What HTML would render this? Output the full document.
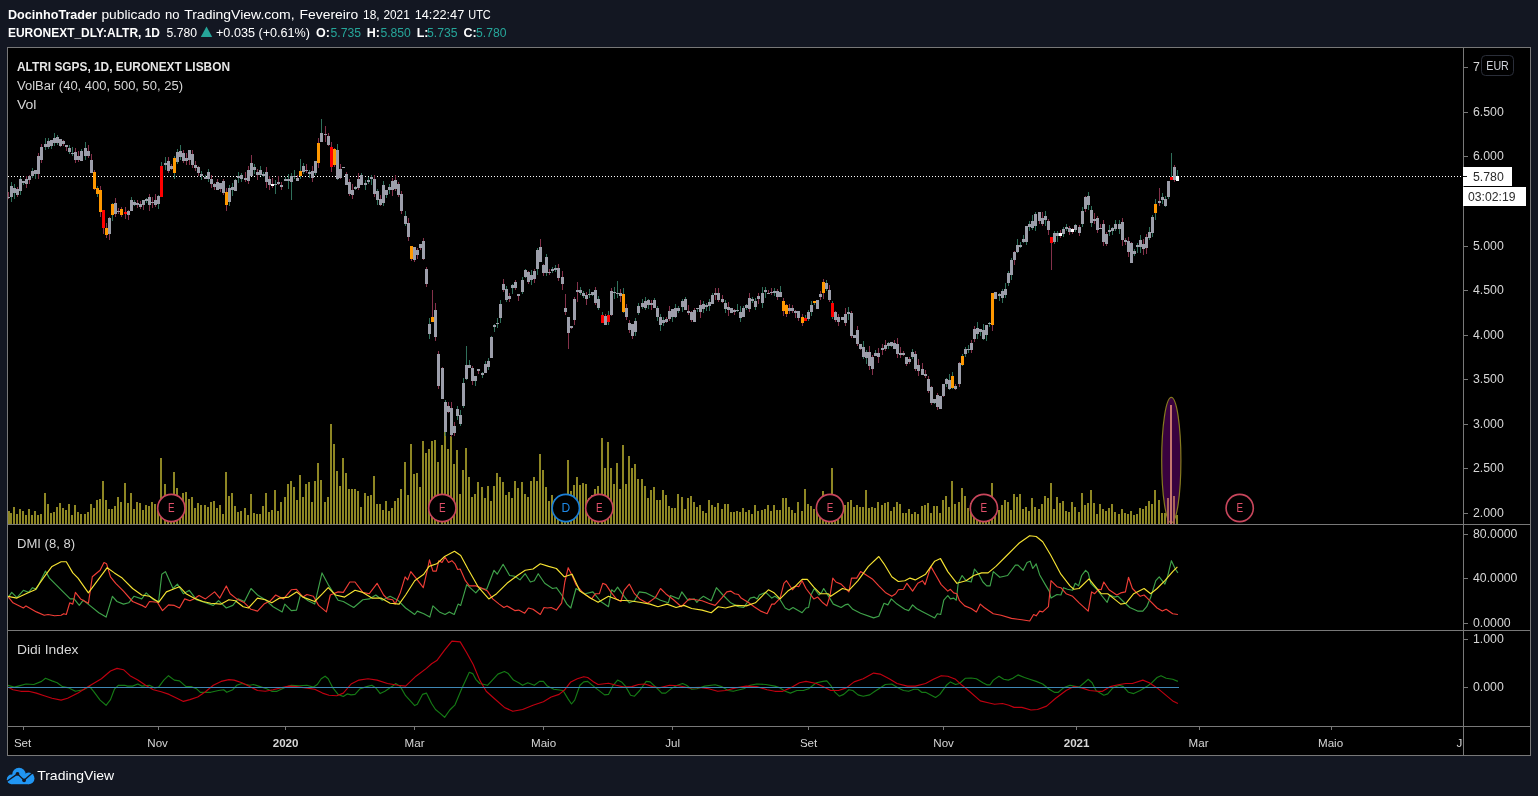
<!DOCTYPE html>
<html><head><meta charset="utf-8"><title>ALTRI SGPS chart</title>
<style>html,body{margin:0;padding:0;background:#131722;overflow:hidden}svg{display:block;will-change:transform;transform:translateZ(0)}text{font-family:"Liberation Sans",sans-serif}</style></head>
<body>
<svg width="1538" height="796" viewBox="0 0 1538 796">
<rect x="0" y="0" width="1538" height="796" fill="#131722"/>
<rect x="7" y="47" width="1524" height="709" fill="#000000"/>
<g clip-path="url(#cp)">
<defs><clipPath id="cp"><rect x="8" y="48" width="1455" height="678"/></clipPath></defs>
<g shape-rendering="crispEdges" fill="#8e8624">
<rect x="8" y="511" width="2" height="13"/>
<rect x="10" y="513" width="2" height="11"/>
<rect x="13" y="507" width="2" height="17"/>
<rect x="16" y="514" width="2" height="10"/>
<rect x="19" y="509" width="2" height="15"/>
<rect x="22" y="511" width="2" height="13"/>
<rect x="25" y="515" width="2" height="9"/>
<rect x="28" y="509" width="2" height="15"/>
<rect x="31" y="515" width="2" height="9"/>
<rect x="34" y="511" width="2" height="13"/>
<rect x="37" y="515" width="2" height="9"/>
<rect x="40" y="514" width="2" height="10"/>
<rect x="44" y="493" width="2" height="31"/>
<rect x="47" y="504" width="2" height="20"/>
<rect x="50" y="513" width="2" height="11"/>
<rect x="53" y="512" width="2" height="12"/>
<rect x="56" y="507" width="2" height="17"/>
<rect x="59" y="503" width="2" height="21"/>
<rect x="62" y="508" width="2" height="16"/>
<rect x="65" y="510" width="2" height="14"/>
<rect x="68" y="504" width="2" height="20"/>
<rect x="71" y="515" width="2" height="9"/>
<rect x="74" y="505" width="2" height="19"/>
<rect x="77" y="512" width="2" height="12"/>
<rect x="80" y="514" width="2" height="10"/>
<rect x="84" y="514" width="2" height="10"/>
<rect x="87" y="512" width="2" height="12"/>
<rect x="90" y="504" width="2" height="20"/>
<rect x="93" y="508" width="2" height="16"/>
<rect x="96" y="500" width="2" height="24"/>
<rect x="99" y="499" width="2" height="25"/>
<rect x="102" y="481" width="2" height="43"/>
<rect x="105" y="500" width="2" height="24"/>
<rect x="108" y="509" width="2" height="15"/>
<rect x="111" y="509" width="2" height="15"/>
<rect x="114" y="506" width="2" height="18"/>
<rect x="117" y="497" width="2" height="27"/>
<rect x="120" y="502" width="2" height="22"/>
<rect x="124" y="483" width="2" height="41"/>
<rect x="127" y="503" width="2" height="21"/>
<rect x="130" y="493" width="2" height="31"/>
<rect x="133" y="509" width="2" height="15"/>
<rect x="136" y="502" width="2" height="22"/>
<rect x="139" y="503" width="2" height="21"/>
<rect x="142" y="510" width="2" height="14"/>
<rect x="145" y="505" width="2" height="19"/>
<rect x="148" y="506" width="2" height="18"/>
<rect x="151" y="502" width="2" height="22"/>
<rect x="154" y="504" width="2" height="20"/>
<rect x="157" y="510" width="2" height="14"/>
<rect x="160" y="458" width="2" height="66"/>
<rect x="164" y="484" width="2" height="40"/>
<rect x="167" y="505" width="2" height="19"/>
<rect x="170" y="498" width="2" height="26"/>
<rect x="173" y="472" width="2" height="52"/>
<rect x="176" y="488" width="2" height="36"/>
<rect x="179" y="508" width="2" height="16"/>
<rect x="182" y="493" width="2" height="31"/>
<rect x="185" y="492" width="2" height="32"/>
<rect x="188" y="499" width="2" height="25"/>
<rect x="191" y="497" width="2" height="27"/>
<rect x="194" y="508" width="2" height="16"/>
<rect x="197" y="503" width="2" height="21"/>
<rect x="200" y="505" width="2" height="19"/>
<rect x="204" y="505" width="2" height="19"/>
<rect x="207" y="507" width="2" height="17"/>
<rect x="210" y="502" width="2" height="22"/>
<rect x="213" y="501" width="2" height="23"/>
<rect x="216" y="508" width="2" height="16"/>
<rect x="219" y="505" width="2" height="19"/>
<rect x="222" y="514" width="2" height="10"/>
<rect x="225" y="472" width="2" height="52"/>
<rect x="228" y="496" width="2" height="28"/>
<rect x="231" y="493" width="2" height="31"/>
<rect x="234" y="506" width="2" height="18"/>
<rect x="237" y="512" width="2" height="12"/>
<rect x="240" y="511" width="2" height="13"/>
<rect x="244" y="508" width="2" height="16"/>
<rect x="247" y="515" width="2" height="9"/>
<rect x="250" y="494" width="2" height="30"/>
<rect x="253" y="513" width="2" height="11"/>
<rect x="256" y="514" width="2" height="10"/>
<rect x="259" y="514" width="2" height="10"/>
<rect x="262" y="506" width="2" height="18"/>
<rect x="265" y="493" width="2" height="31"/>
<rect x="268" y="512" width="2" height="12"/>
<rect x="271" y="510" width="2" height="14"/>
<rect x="274" y="490" width="2" height="34"/>
<rect x="277" y="511" width="2" height="13"/>
<rect x="280" y="502" width="2" height="22"/>
<rect x="284" y="497" width="2" height="27"/>
<rect x="287" y="484" width="2" height="40"/>
<rect x="290" y="481" width="2" height="43"/>
<rect x="293" y="487" width="2" height="37"/>
<rect x="296" y="500" width="2" height="24"/>
<rect x="299" y="475" width="2" height="49"/>
<rect x="302" y="497" width="2" height="27"/>
<rect x="305" y="484" width="2" height="40"/>
<rect x="308" y="482" width="2" height="42"/>
<rect x="311" y="502" width="2" height="22"/>
<rect x="314" y="481" width="2" height="43"/>
<rect x="317" y="463" width="2" height="61"/>
<rect x="320" y="480" width="2" height="44"/>
<rect x="324" y="502" width="2" height="22"/>
<rect x="327" y="497" width="2" height="27"/>
<rect x="330" y="424" width="2" height="100"/>
<rect x="333" y="444" width="2" height="80"/>
<rect x="336" y="471" width="2" height="53"/>
<rect x="339" y="486" width="2" height="38"/>
<rect x="342" y="458" width="2" height="66"/>
<rect x="345" y="473" width="2" height="51"/>
<rect x="348" y="489" width="2" height="35"/>
<rect x="351" y="489" width="2" height="35"/>
<rect x="354" y="489" width="2" height="35"/>
<rect x="357" y="491" width="2" height="33"/>
<rect x="360" y="507" width="2" height="17"/>
<rect x="364" y="493" width="2" height="31"/>
<rect x="367" y="496" width="2" height="28"/>
<rect x="370" y="495" width="2" height="29"/>
<rect x="373" y="476" width="2" height="48"/>
<rect x="376" y="504" width="2" height="20"/>
<rect x="379" y="504" width="2" height="20"/>
<rect x="382" y="510" width="2" height="14"/>
<rect x="385" y="501" width="2" height="23"/>
<rect x="388" y="511" width="2" height="13"/>
<rect x="391" y="508" width="2" height="16"/>
<rect x="394" y="501" width="2" height="23"/>
<rect x="397" y="498" width="2" height="26"/>
<rect x="400" y="489" width="2" height="35"/>
<rect x="404" y="462" width="2" height="62"/>
<rect x="407" y="495" width="2" height="29"/>
<rect x="410" y="444" width="2" height="80"/>
<rect x="413" y="474" width="2" height="50"/>
<rect x="416" y="473" width="2" height="51"/>
<rect x="419" y="487" width="2" height="37"/>
<rect x="422" y="441" width="2" height="83"/>
<rect x="425" y="453" width="2" height="71"/>
<rect x="428" y="449" width="2" height="75"/>
<rect x="431" y="441" width="2" height="83"/>
<rect x="434" y="440" width="2" height="84"/>
<rect x="437" y="462" width="2" height="62"/>
<rect x="441" y="445" width="2" height="79"/>
<rect x="444" y="432" width="2" height="92"/>
<rect x="447" y="449" width="2" height="75"/>
<rect x="450" y="436" width="2" height="88"/>
<rect x="453" y="464" width="2" height="60"/>
<rect x="456" y="450" width="2" height="74"/>
<rect x="459" y="494" width="2" height="30"/>
<rect x="462" y="470" width="2" height="54"/>
<rect x="465" y="448" width="2" height="76"/>
<rect x="468" y="477" width="2" height="47"/>
<rect x="471" y="497" width="2" height="27"/>
<rect x="474" y="494" width="2" height="30"/>
<rect x="477" y="482" width="2" height="42"/>
<rect x="481" y="487" width="2" height="37"/>
<rect x="484" y="498" width="2" height="26"/>
<rect x="487" y="486" width="2" height="38"/>
<rect x="490" y="501" width="2" height="23"/>
<rect x="493" y="486" width="2" height="38"/>
<rect x="496" y="473" width="2" height="51"/>
<rect x="499" y="477" width="2" height="47"/>
<rect x="502" y="482" width="2" height="42"/>
<rect x="505" y="495" width="2" height="29"/>
<rect x="508" y="492" width="2" height="32"/>
<rect x="511" y="498" width="2" height="26"/>
<rect x="514" y="481" width="2" height="43"/>
<rect x="517" y="488" width="2" height="36"/>
<rect x="521" y="482" width="2" height="42"/>
<rect x="524" y="494" width="2" height="30"/>
<rect x="527" y="497" width="2" height="27"/>
<rect x="530" y="481" width="2" height="43"/>
<rect x="533" y="477" width="2" height="47"/>
<rect x="536" y="481" width="2" height="43"/>
<rect x="539" y="454" width="2" height="70"/>
<rect x="542" y="470" width="2" height="54"/>
<rect x="545" y="487" width="2" height="37"/>
<rect x="548" y="501" width="2" height="23"/>
<rect x="551" y="495" width="2" height="29"/>
<rect x="554" y="499" width="2" height="25"/>
<rect x="557" y="507" width="2" height="17"/>
<rect x="561" y="507" width="2" height="17"/>
<rect x="564" y="501" width="2" height="23"/>
<rect x="567" y="460" width="2" height="64"/>
<rect x="570" y="491" width="2" height="33"/>
<rect x="573" y="485" width="2" height="39"/>
<rect x="576" y="477" width="2" height="47"/>
<rect x="579" y="485" width="2" height="39"/>
<rect x="582" y="483" width="2" height="41"/>
<rect x="585" y="484" width="2" height="40"/>
<rect x="588" y="498" width="2" height="26"/>
<rect x="591" y="495" width="2" height="29"/>
<rect x="594" y="489" width="2" height="35"/>
<rect x="597" y="486" width="2" height="38"/>
<rect x="601" y="438" width="2" height="86"/>
<rect x="604" y="468" width="2" height="56"/>
<rect x="607" y="442" width="2" height="82"/>
<rect x="610" y="468" width="2" height="56"/>
<rect x="613" y="484" width="2" height="40"/>
<rect x="616" y="463" width="2" height="61"/>
<rect x="619" y="489" width="2" height="35"/>
<rect x="622" y="445" width="2" height="79"/>
<rect x="625" y="484" width="2" height="40"/>
<rect x="628" y="456" width="2" height="68"/>
<rect x="631" y="468" width="2" height="56"/>
<rect x="634" y="464" width="2" height="60"/>
<rect x="637" y="479" width="2" height="45"/>
<rect x="641" y="479" width="2" height="45"/>
<rect x="644" y="486" width="2" height="38"/>
<rect x="647" y="498" width="2" height="26"/>
<rect x="650" y="490" width="2" height="34"/>
<rect x="653" y="487" width="2" height="37"/>
<rect x="656" y="500" width="2" height="24"/>
<rect x="659" y="500" width="2" height="24"/>
<rect x="662" y="490" width="2" height="34"/>
<rect x="665" y="495" width="2" height="29"/>
<rect x="668" y="506" width="2" height="18"/>
<rect x="671" y="508" width="2" height="16"/>
<rect x="674" y="508" width="2" height="16"/>
<rect x="677" y="494" width="2" height="30"/>
<rect x="681" y="497" width="2" height="27"/>
<rect x="684" y="509" width="2" height="15"/>
<rect x="687" y="498" width="2" height="26"/>
<rect x="690" y="496" width="2" height="28"/>
<rect x="693" y="502" width="2" height="22"/>
<rect x="696" y="507" width="2" height="17"/>
<rect x="699" y="505" width="2" height="19"/>
<rect x="702" y="511" width="2" height="13"/>
<rect x="705" y="513" width="2" height="11"/>
<rect x="708" y="500" width="2" height="24"/>
<rect x="711" y="505" width="2" height="19"/>
<rect x="714" y="507" width="2" height="17"/>
<rect x="717" y="503" width="2" height="21"/>
<rect x="721" y="509" width="2" height="15"/>
<rect x="724" y="504" width="2" height="20"/>
<rect x="727" y="504" width="2" height="20"/>
<rect x="730" y="512" width="2" height="12"/>
<rect x="733" y="512" width="2" height="12"/>
<rect x="736" y="511" width="2" height="13"/>
<rect x="739" y="512" width="2" height="12"/>
<rect x="742" y="508" width="2" height="16"/>
<rect x="745" y="512" width="2" height="12"/>
<rect x="748" y="510" width="2" height="14"/>
<rect x="751" y="514" width="2" height="10"/>
<rect x="754" y="505" width="2" height="19"/>
<rect x="757" y="511" width="2" height="13"/>
<rect x="761" y="510" width="2" height="14"/>
<rect x="764" y="509" width="2" height="15"/>
<rect x="767" y="505" width="2" height="19"/>
<rect x="770" y="511" width="2" height="13"/>
<rect x="773" y="505" width="2" height="19"/>
<rect x="776" y="510" width="2" height="14"/>
<rect x="779" y="510" width="2" height="14"/>
<rect x="782" y="498" width="2" height="26"/>
<rect x="785" y="498" width="2" height="26"/>
<rect x="788" y="507" width="2" height="17"/>
<rect x="791" y="510" width="2" height="14"/>
<rect x="794" y="513" width="2" height="11"/>
<rect x="797" y="502" width="2" height="22"/>
<rect x="801" y="511" width="2" height="13"/>
<rect x="804" y="489" width="2" height="35"/>
<rect x="807" y="504" width="2" height="20"/>
<rect x="810" y="506" width="2" height="18"/>
<rect x="813" y="509" width="2" height="15"/>
<rect x="816" y="506" width="2" height="18"/>
<rect x="819" y="506" width="2" height="18"/>
<rect x="822" y="491" width="2" height="33"/>
<rect x="825" y="512" width="2" height="12"/>
<rect x="828" y="505" width="2" height="19"/>
<rect x="831" y="468" width="2" height="56"/>
<rect x="834" y="509" width="2" height="15"/>
<rect x="837" y="502" width="2" height="22"/>
<rect x="841" y="506" width="2" height="18"/>
<rect x="844" y="505" width="2" height="19"/>
<rect x="847" y="502" width="2" height="22"/>
<rect x="850" y="500" width="2" height="24"/>
<rect x="853" y="507" width="2" height="17"/>
<rect x="856" y="505" width="2" height="19"/>
<rect x="859" y="507" width="2" height="17"/>
<rect x="862" y="507" width="2" height="17"/>
<rect x="865" y="490" width="2" height="34"/>
<rect x="868" y="508" width="2" height="16"/>
<rect x="871" y="507" width="2" height="17"/>
<rect x="874" y="508" width="2" height="16"/>
<rect x="877" y="502" width="2" height="22"/>
<rect x="881" y="505" width="2" height="19"/>
<rect x="884" y="503" width="2" height="21"/>
<rect x="887" y="502" width="2" height="22"/>
<rect x="890" y="511" width="2" height="13"/>
<rect x="893" y="507" width="2" height="17"/>
<rect x="896" y="502" width="2" height="22"/>
<rect x="899" y="504" width="2" height="20"/>
<rect x="902" y="513" width="2" height="11"/>
<rect x="905" y="513" width="2" height="11"/>
<rect x="908" y="509" width="2" height="15"/>
<rect x="911" y="514" width="2" height="10"/>
<rect x="914" y="512" width="2" height="12"/>
<rect x="917" y="514" width="2" height="10"/>
<rect x="921" y="506" width="2" height="18"/>
<rect x="924" y="505" width="2" height="19"/>
<rect x="927" y="503" width="2" height="21"/>
<rect x="930" y="513" width="2" height="11"/>
<rect x="933" y="506" width="2" height="18"/>
<rect x="936" y="506" width="2" height="18"/>
<rect x="939" y="513" width="2" height="11"/>
<rect x="942" y="500" width="2" height="24"/>
<rect x="945" y="496" width="2" height="28"/>
<rect x="948" y="507" width="2" height="17"/>
<rect x="951" y="481" width="2" height="43"/>
<rect x="954" y="504" width="2" height="20"/>
<rect x="958" y="502" width="2" height="22"/>
<rect x="961" y="488" width="2" height="36"/>
<rect x="964" y="496" width="2" height="28"/>
<rect x="967" y="508" width="2" height="16"/>
<rect x="970" y="503" width="2" height="21"/>
<rect x="973" y="502" width="2" height="22"/>
<rect x="976" y="505" width="2" height="19"/>
<rect x="979" y="507" width="2" height="17"/>
<rect x="982" y="505" width="2" height="19"/>
<rect x="985" y="498" width="2" height="26"/>
<rect x="988" y="510" width="2" height="14"/>
<rect x="991" y="483" width="2" height="41"/>
<rect x="994" y="503" width="2" height="21"/>
<rect x="998" y="510" width="2" height="14"/>
<rect x="1001" y="505" width="2" height="19"/>
<rect x="1004" y="500" width="2" height="24"/>
<rect x="1007" y="502" width="2" height="22"/>
<rect x="1010" y="510" width="2" height="14"/>
<rect x="1013" y="494" width="2" height="30"/>
<rect x="1016" y="497" width="2" height="27"/>
<rect x="1019" y="494" width="2" height="30"/>
<rect x="1022" y="509" width="2" height="15"/>
<rect x="1025" y="507" width="2" height="17"/>
<rect x="1028" y="511" width="2" height="13"/>
<rect x="1031" y="498" width="2" height="26"/>
<rect x="1034" y="507" width="2" height="17"/>
<rect x="1038" y="509" width="2" height="15"/>
<rect x="1041" y="504" width="2" height="20"/>
<rect x="1044" y="496" width="2" height="28"/>
<rect x="1047" y="498" width="2" height="26"/>
<rect x="1050" y="483" width="2" height="41"/>
<rect x="1053" y="509" width="2" height="15"/>
<rect x="1056" y="497" width="2" height="27"/>
<rect x="1059" y="503" width="2" height="21"/>
<rect x="1062" y="501" width="2" height="23"/>
<rect x="1065" y="511" width="2" height="13"/>
<rect x="1068" y="512" width="2" height="12"/>
<rect x="1071" y="502" width="2" height="22"/>
<rect x="1074" y="507" width="2" height="17"/>
<rect x="1078" y="512" width="2" height="12"/>
<rect x="1081" y="493" width="2" height="31"/>
<rect x="1084" y="505" width="2" height="19"/>
<rect x="1087" y="503" width="2" height="21"/>
<rect x="1090" y="490" width="2" height="34"/>
<rect x="1093" y="503" width="2" height="21"/>
<rect x="1096" y="514" width="2" height="10"/>
<rect x="1099" y="504" width="2" height="20"/>
<rect x="1102" y="509" width="2" height="15"/>
<rect x="1105" y="511" width="2" height="13"/>
<rect x="1108" y="508" width="2" height="16"/>
<rect x="1111" y="504" width="2" height="20"/>
<rect x="1114" y="512" width="2" height="12"/>
<rect x="1118" y="514" width="2" height="10"/>
<rect x="1121" y="509" width="2" height="15"/>
<rect x="1124" y="513" width="2" height="11"/>
<rect x="1127" y="514" width="2" height="10"/>
<rect x="1130" y="511" width="2" height="13"/>
<rect x="1133" y="515" width="2" height="9"/>
<rect x="1136" y="514" width="2" height="10"/>
<rect x="1139" y="508" width="2" height="16"/>
<rect x="1142" y="509" width="2" height="15"/>
<rect x="1145" y="506" width="2" height="18"/>
<rect x="1148" y="501" width="2" height="23"/>
<rect x="1151" y="504" width="2" height="20"/>
<rect x="1154" y="490" width="2" height="34"/>
<rect x="1158" y="500" width="2" height="24"/>
<rect x="1161" y="513" width="2" height="11"/>
<rect x="1164" y="513" width="2" height="11"/>
<rect x="1167" y="516" width="2" height="8"/>
<rect x="1170" y="405" width="2" height="119" fill="#c0776b"/>
<rect x="1173" y="496" width="2" height="28"/>
<rect x="1176" y="515" width="2" height="9"/>
</g>
<line x1="8" y1="176.5" x2="1463" y2="176.5" stroke="#ffffff" stroke-width="1" stroke-dasharray="1 2" shape-rendering="crispEdges"/>
<g shape-rendering="crispEdges">
<rect x="8" y="192" width="1" height="7" fill="#84314a"/>
<rect x="8" y="197" width="2" height="1" fill="#9c9eaa"/>
<rect x="11" y="182" width="1" height="20" fill="#2f6f5a"/>
<rect x="10" y="186" width="3" height="11" fill="#9c9eaa"/>
<rect x="14" y="184" width="1" height="15" fill="#2f6f5a"/>
<rect x="13" y="188" width="3" height="5" fill="#9c9eaa"/>
<rect x="17" y="187" width="1" height="10" fill="#84314a"/>
<rect x="16" y="189" width="3" height="6" fill="#9c9eaa"/>
<rect x="20" y="177" width="1" height="18" fill="#2f6f5a"/>
<rect x="19" y="179" width="3" height="12" fill="#9c9eaa"/>
<rect x="23" y="181" width="1" height="4" fill="#2f6f5a"/>
<rect x="22" y="181" width="3" height="2" fill="#9c9eaa"/>
<rect x="26" y="176" width="1" height="12" fill="#84314a"/>
<rect x="25" y="179" width="3" height="5" fill="#9c9eaa"/>
<rect x="29" y="175" width="1" height="9" fill="#84314a"/>
<rect x="28" y="176" width="3" height="4" fill="#9c9eaa"/>
<rect x="32" y="168" width="1" height="10" fill="#2f6f5a"/>
<rect x="31" y="171" width="3" height="5" fill="#9c9eaa"/>
<rect x="35" y="170" width="1" height="9" fill="#2f6f5a"/>
<rect x="34" y="170" width="3" height="4" fill="#9c9eaa"/>
<rect x="38" y="153" width="1" height="26" fill="#84314a"/>
<rect x="37" y="156" width="3" height="18" fill="#9c9eaa"/>
<rect x="41" y="144" width="1" height="19" fill="#84314a"/>
<rect x="40" y="147" width="3" height="13" fill="#9c9eaa"/>
<rect x="45" y="138" width="1" height="12" fill="#2f6f5a"/>
<rect x="44" y="144" width="3" height="3" fill="#9c9eaa"/>
<rect x="48" y="138" width="1" height="11" fill="#2f6f5a"/>
<rect x="47" y="141" width="3" height="6" fill="#9c9eaa"/>
<rect x="51" y="140" width="1" height="9" fill="#2f6f5a"/>
<rect x="50" y="140" width="3" height="6" fill="#9c9eaa"/>
<rect x="54" y="133" width="1" height="13" fill="#2f6f5a"/>
<rect x="53" y="138" width="3" height="5" fill="#9c9eaa"/>
<rect x="57" y="135" width="1" height="10" fill="#2f6f5a"/>
<rect x="56" y="137" width="3" height="6" fill="#9c9eaa"/>
<rect x="60" y="139" width="1" height="8" fill="#84314a"/>
<rect x="59" y="139" width="3" height="7" fill="#9c9eaa"/>
<rect x="63" y="140" width="1" height="6" fill="#84314a"/>
<rect x="62" y="141" width="3" height="3" fill="#9c9eaa"/>
<rect x="66" y="145" width="1" height="6" fill="#84314a"/>
<rect x="65" y="145" width="3" height="2" fill="#9c9eaa"/>
<rect x="69" y="145" width="1" height="9" fill="#2f6f5a"/>
<rect x="68" y="148" width="3" height="4" fill="#9c9eaa"/>
<rect x="72" y="147" width="1" height="9" fill="#2f6f5a"/>
<rect x="71" y="153" width="3" height="1" fill="#9c9eaa"/>
<rect x="75" y="148" width="1" height="15" fill="#84314a"/>
<rect x="74" y="152" width="3" height="8" fill="#9c9eaa"/>
<rect x="78" y="151" width="1" height="11" fill="#84314a"/>
<rect x="77" y="156" width="3" height="4" fill="#9c9eaa"/>
<rect x="81" y="149" width="1" height="12" fill="#2f6f5a"/>
<rect x="80" y="151" width="3" height="10" fill="#9c9eaa"/>
<rect x="85" y="142" width="1" height="18" fill="#2f6f5a"/>
<rect x="84" y="148" width="3" height="8" fill="#9c9eaa"/>
<rect x="88" y="145" width="1" height="13" fill="#84314a"/>
<rect x="87" y="151" width="3" height="5" fill="#9c9eaa"/>
<rect x="91" y="154" width="1" height="19" fill="#84314a"/>
<rect x="90" y="160" width="3" height="13" fill="#9c9eaa"/>
<rect x="94" y="170" width="1" height="20" fill="#84314a"/>
<rect x="93" y="172" width="3" height="17" fill="#ff9800"/>
<rect x="97" y="186" width="1" height="11" fill="#2f6f5a"/>
<rect x="96" y="188" width="3" height="6" fill="#ff9800"/>
<rect x="100" y="186" width="1" height="31" fill="#84314a"/>
<rect x="99" y="190" width="3" height="22" fill="#ff9800"/>
<rect x="103" y="210" width="1" height="24" fill="#84314a"/>
<rect x="102" y="210" width="3" height="18" fill="#ff0000"/>
<rect x="106" y="223" width="1" height="15" fill="#84314a"/>
<rect x="105" y="228" width="3" height="7" fill="#ff9800"/>
<rect x="109" y="217" width="1" height="23" fill="#84314a"/>
<rect x="108" y="218" width="3" height="16" fill="#9c9eaa"/>
<rect x="112" y="203" width="1" height="18" fill="#2f6f5a"/>
<rect x="111" y="204" width="3" height="11" fill="#ff9800"/>
<rect x="115" y="198" width="1" height="19" fill="#84314a"/>
<rect x="114" y="203" width="3" height="11" fill="#9c9eaa"/>
<rect x="118" y="208" width="1" height="6" fill="#84314a"/>
<rect x="117" y="211" width="3" height="1" fill="#9c9eaa"/>
<rect x="121" y="207" width="1" height="10" fill="#84314a"/>
<rect x="120" y="209" width="3" height="6" fill="#ff9800"/>
<rect x="125" y="207" width="1" height="12" fill="#84314a"/>
<rect x="124" y="212" width="3" height="2" fill="#ff0000"/>
<rect x="128" y="210" width="1" height="10" fill="#84314a"/>
<rect x="127" y="211" width="3" height="4" fill="#9c9eaa"/>
<rect x="131" y="197" width="1" height="14" fill="#2f6f5a"/>
<rect x="130" y="200" width="3" height="11" fill="#9c9eaa"/>
<rect x="134" y="200" width="1" height="6" fill="#2f6f5a"/>
<rect x="133" y="202" width="3" height="3" fill="#9c9eaa"/>
<rect x="137" y="200" width="1" height="8" fill="#84314a"/>
<rect x="136" y="203" width="3" height="2" fill="#9c9eaa"/>
<rect x="140" y="201" width="1" height="8" fill="#84314a"/>
<rect x="139" y="204" width="3" height="3" fill="#9c9eaa"/>
<rect x="143" y="200" width="1" height="10" fill="#84314a"/>
<rect x="142" y="200" width="3" height="5" fill="#9c9eaa"/>
<rect x="146" y="198" width="1" height="5" fill="#2f6f5a"/>
<rect x="145" y="199" width="3" height="2" fill="#9c9eaa"/>
<rect x="149" y="194" width="1" height="17" fill="#84314a"/>
<rect x="148" y="197" width="3" height="8" fill="#9c9eaa"/>
<rect x="152" y="197" width="1" height="11" fill="#84314a"/>
<rect x="151" y="202" width="3" height="1" fill="#9c9eaa"/>
<rect x="155" y="194" width="1" height="13" fill="#84314a"/>
<rect x="154" y="200" width="3" height="5" fill="#9c9eaa"/>
<rect x="158" y="195" width="1" height="14" fill="#2f6f5a"/>
<rect x="157" y="196" width="3" height="8" fill="#9c9eaa"/>
<rect x="161" y="162" width="1" height="35" fill="#2f6f5a"/>
<rect x="160" y="166" width="3" height="31" fill="#ff0000"/>
<rect x="165" y="157" width="1" height="13" fill="#2f6f5a"/>
<rect x="164" y="163" width="3" height="2" fill="#9c9eaa"/>
<rect x="168" y="157" width="1" height="16" fill="#84314a"/>
<rect x="167" y="161" width="3" height="10" fill="#9c9eaa"/>
<rect x="171" y="164" width="1" height="6" fill="#84314a"/>
<rect x="170" y="166" width="3" height="3" fill="#9c9eaa"/>
<rect x="174" y="156" width="1" height="23" fill="#2f6f5a"/>
<rect x="173" y="158" width="3" height="15" fill="#ff9800"/>
<rect x="177" y="149" width="1" height="15" fill="#2f6f5a"/>
<rect x="176" y="152" width="3" height="10" fill="#9c9eaa"/>
<rect x="180" y="145" width="1" height="15" fill="#2f6f5a"/>
<rect x="179" y="151" width="3" height="6" fill="#9c9eaa"/>
<rect x="183" y="150" width="1" height="13" fill="#84314a"/>
<rect x="182" y="153" width="3" height="8" fill="#9c9eaa"/>
<rect x="186" y="153" width="1" height="12" fill="#84314a"/>
<rect x="185" y="158" width="3" height="3" fill="#9c9eaa"/>
<rect x="189" y="150" width="1" height="15" fill="#84314a"/>
<rect x="188" y="150" width="3" height="10" fill="#9c9eaa"/>
<rect x="192" y="150" width="1" height="18" fill="#84314a"/>
<rect x="191" y="154" width="3" height="11" fill="#9c9eaa"/>
<rect x="195" y="161" width="1" height="10" fill="#84314a"/>
<rect x="194" y="165" width="3" height="3" fill="#9c9eaa"/>
<rect x="198" y="166" width="1" height="10" fill="#84314a"/>
<rect x="197" y="167" width="3" height="6" fill="#9c9eaa"/>
<rect x="201" y="171" width="1" height="9" fill="#2f6f5a"/>
<rect x="200" y="174" width="3" height="2" fill="#9c9eaa"/>
<rect x="205" y="175" width="1" height="4" fill="#2f6f5a"/>
<rect x="204" y="177" width="3" height="2" fill="#9c9eaa"/>
<rect x="208" y="169" width="1" height="13" fill="#2f6f5a"/>
<rect x="207" y="172" width="3" height="7" fill="#9c9eaa"/>
<rect x="211" y="175" width="1" height="13" fill="#84314a"/>
<rect x="210" y="179" width="3" height="5" fill="#9c9eaa"/>
<rect x="214" y="183" width="1" height="7" fill="#84314a"/>
<rect x="213" y="184" width="3" height="3" fill="#9c9eaa"/>
<rect x="217" y="179" width="1" height="11" fill="#84314a"/>
<rect x="216" y="182" width="3" height="8" fill="#9c9eaa"/>
<rect x="220" y="183" width="1" height="9" fill="#84314a"/>
<rect x="219" y="183" width="3" height="6" fill="#9c9eaa"/>
<rect x="223" y="179" width="1" height="16" fill="#84314a"/>
<rect x="222" y="181" width="3" height="12" fill="#9c9eaa"/>
<rect x="226" y="188" width="1" height="23" fill="#84314a"/>
<rect x="225" y="192" width="3" height="13" fill="#ff9800"/>
<rect x="229" y="185" width="1" height="21" fill="#2f6f5a"/>
<rect x="228" y="188" width="3" height="14" fill="#9c9eaa"/>
<rect x="232" y="183" width="1" height="13" fill="#2f6f5a"/>
<rect x="231" y="187" width="3" height="3" fill="#9c9eaa"/>
<rect x="235" y="179" width="1" height="12" fill="#2f6f5a"/>
<rect x="234" y="180" width="3" height="11" fill="#9c9eaa"/>
<rect x="238" y="172" width="1" height="11" fill="#2f6f5a"/>
<rect x="237" y="176" width="3" height="2" fill="#9c9eaa"/>
<rect x="241" y="173" width="1" height="9" fill="#2f6f5a"/>
<rect x="240" y="175" width="3" height="4" fill="#9c9eaa"/>
<rect x="245" y="172" width="1" height="10" fill="#84314a"/>
<rect x="244" y="178" width="3" height="2" fill="#9c9eaa"/>
<rect x="248" y="166" width="1" height="18" fill="#84314a"/>
<rect x="247" y="170" width="3" height="11" fill="#9c9eaa"/>
<rect x="251" y="155" width="1" height="21" fill="#84314a"/>
<rect x="250" y="163" width="3" height="13" fill="#9c9eaa"/>
<rect x="254" y="164" width="1" height="10" fill="#2f6f5a"/>
<rect x="253" y="167" width="3" height="3" fill="#9c9eaa"/>
<rect x="257" y="169" width="1" height="11" fill="#84314a"/>
<rect x="256" y="172" width="3" height="3" fill="#9c9eaa"/>
<rect x="260" y="166" width="1" height="10" fill="#2f6f5a"/>
<rect x="259" y="170" width="3" height="5" fill="#9c9eaa"/>
<rect x="263" y="172" width="1" height="5" fill="#2f6f5a"/>
<rect x="262" y="174" width="3" height="2" fill="#9c9eaa"/>
<rect x="266" y="167" width="1" height="21" fill="#84314a"/>
<rect x="265" y="172" width="3" height="10" fill="#9c9eaa"/>
<rect x="269" y="176" width="1" height="14" fill="#84314a"/>
<rect x="268" y="179" width="3" height="6" fill="#9c9eaa"/>
<rect x="272" y="178" width="1" height="10" fill="#84314a"/>
<rect x="271" y="184" width="3" height="2" fill="#ffffff"/>
<rect x="275" y="180" width="1" height="14" fill="#2f6f5a"/>
<rect x="274" y="184" width="3" height="1" fill="#9c9eaa"/>
<rect x="278" y="176" width="1" height="9" fill="#84314a"/>
<rect x="277" y="182" width="3" height="2" fill="#9c9eaa"/>
<rect x="281" y="182" width="1" height="8" fill="#84314a"/>
<rect x="280" y="185" width="3" height="2" fill="#9c9eaa"/>
<rect x="285" y="177" width="1" height="4" fill="#2f6f5a"/>
<rect x="284" y="179" width="3" height="2" fill="#9c9eaa"/>
<rect x="288" y="174" width="1" height="15" fill="#2f6f5a"/>
<rect x="287" y="179" width="3" height="2" fill="#9c9eaa"/>
<rect x="291" y="173" width="1" height="27" fill="#2f6f5a"/>
<rect x="290" y="176" width="3" height="6" fill="#9c9eaa"/>
<rect x="294" y="170" width="1" height="9" fill="#2f6f5a"/>
<rect x="293" y="176" width="3" height="1" fill="#9c9eaa"/>
<rect x="297" y="175" width="1" height="6" fill="#84314a"/>
<rect x="296" y="178" width="3" height="3" fill="#9c9eaa"/>
<rect x="300" y="159" width="1" height="20" fill="#2f6f5a"/>
<rect x="299" y="171" width="3" height="5" fill="#ff9800"/>
<rect x="303" y="163" width="1" height="11" fill="#2f6f5a"/>
<rect x="302" y="166" width="3" height="6" fill="#9c9eaa"/>
<rect x="306" y="164" width="1" height="9" fill="#84314a"/>
<rect x="305" y="170" width="3" height="1" fill="#9c9eaa"/>
<rect x="309" y="170" width="1" height="8" fill="#2f6f5a"/>
<rect x="308" y="172" width="3" height="2" fill="#9c9eaa"/>
<rect x="312" y="166" width="1" height="16" fill="#84314a"/>
<rect x="311" y="171" width="3" height="7" fill="#9c9eaa"/>
<rect x="315" y="161" width="1" height="14" fill="#2f6f5a"/>
<rect x="314" y="161" width="3" height="12" fill="#9c9eaa"/>
<rect x="318" y="138" width="1" height="30" fill="#84314a"/>
<rect x="317" y="143" width="3" height="20" fill="#ff9800"/>
<rect x="321" y="119" width="1" height="23" fill="#2f6f5a"/>
<rect x="320" y="133" width="3" height="9" fill="#9c9eaa"/>
<rect x="325" y="126" width="1" height="16" fill="#84314a"/>
<rect x="324" y="134" width="3" height="1" fill="#9c9eaa"/>
<rect x="328" y="133" width="1" height="13" fill="#84314a"/>
<rect x="327" y="136" width="3" height="9" fill="#9c9eaa"/>
<rect x="331" y="142" width="1" height="30" fill="#84314a"/>
<rect x="330" y="147" width="3" height="20" fill="#ff0000"/>
<rect x="334" y="148" width="1" height="19" fill="#84314a"/>
<rect x="333" y="149" width="3" height="16" fill="#ff9800"/>
<rect x="337" y="144" width="1" height="36" fill="#2f6f5a"/>
<rect x="336" y="150" width="3" height="29" fill="#9c9eaa"/>
<rect x="340" y="164" width="1" height="15" fill="#84314a"/>
<rect x="339" y="169" width="3" height="9" fill="#9c9eaa"/>
<rect x="343" y="167" width="1" height="1" fill="#2f6f5a"/>
<rect x="342" y="167" width="3" height="1" fill="#9c9eaa"/>
<rect x="346" y="172" width="1" height="13" fill="#84314a"/>
<rect x="345" y="174" width="3" height="11" fill="#9c9eaa"/>
<rect x="349" y="179" width="1" height="17" fill="#84314a"/>
<rect x="348" y="182" width="3" height="12" fill="#9c9eaa"/>
<rect x="352" y="184" width="1" height="15" fill="#84314a"/>
<rect x="351" y="190" width="3" height="5" fill="#9c9eaa"/>
<rect x="355" y="186" width="1" height="4" fill="#2f6f5a"/>
<rect x="354" y="187" width="3" height="2" fill="#9c9eaa"/>
<rect x="358" y="173" width="1" height="17" fill="#84314a"/>
<rect x="357" y="179" width="3" height="9" fill="#9c9eaa"/>
<rect x="361" y="173" width="1" height="12" fill="#2f6f5a"/>
<rect x="360" y="175" width="3" height="10" fill="#9c9eaa"/>
<rect x="365" y="180" width="1" height="10" fill="#2f6f5a"/>
<rect x="364" y="183" width="3" height="2" fill="#9c9eaa"/>
<rect x="368" y="177" width="1" height="7" fill="#2f6f5a"/>
<rect x="367" y="180" width="3" height="2" fill="#9c9eaa"/>
<rect x="371" y="175" width="1" height="10" fill="#2f6f5a"/>
<rect x="370" y="177" width="3" height="2" fill="#9c9eaa"/>
<rect x="374" y="175" width="1" height="22" fill="#84314a"/>
<rect x="373" y="179" width="3" height="15" fill="#9c9eaa"/>
<rect x="377" y="189" width="1" height="16" fill="#2f6f5a"/>
<rect x="376" y="191" width="3" height="9" fill="#9c9eaa"/>
<rect x="380" y="195" width="1" height="11" fill="#84314a"/>
<rect x="379" y="199" width="3" height="6" fill="#9c9eaa"/>
<rect x="383" y="181" width="1" height="25" fill="#2f6f5a"/>
<rect x="382" y="185" width="3" height="18" fill="#9c9eaa"/>
<rect x="386" y="190" width="1" height="8" fill="#2f6f5a"/>
<rect x="385" y="190" width="3" height="5" fill="#9c9eaa"/>
<rect x="389" y="184" width="1" height="10" fill="#2f6f5a"/>
<rect x="388" y="187" width="3" height="3" fill="#9c9eaa"/>
<rect x="392" y="178" width="1" height="18" fill="#84314a"/>
<rect x="391" y="181" width="3" height="9" fill="#9c9eaa"/>
<rect x="395" y="175" width="1" height="16" fill="#84314a"/>
<rect x="394" y="180" width="3" height="9" fill="#9c9eaa"/>
<rect x="398" y="182" width="1" height="15" fill="#84314a"/>
<rect x="397" y="184" width="3" height="11" fill="#9c9eaa"/>
<rect x="401" y="191" width="1" height="23" fill="#84314a"/>
<rect x="400" y="194" width="3" height="17" fill="#9c9eaa"/>
<rect x="405" y="211" width="1" height="15" fill="#2f6f5a"/>
<rect x="404" y="216" width="3" height="8" fill="#9c9eaa"/>
<rect x="408" y="218" width="1" height="23" fill="#84314a"/>
<rect x="407" y="223" width="3" height="14" fill="#9c9eaa"/>
<rect x="411" y="246" width="1" height="15" fill="#84314a"/>
<rect x="410" y="246" width="3" height="13" fill="#ff9800"/>
<rect x="414" y="247" width="1" height="15" fill="#84314a"/>
<rect x="413" y="247" width="3" height="13" fill="#9c9eaa"/>
<rect x="417" y="248" width="1" height="11" fill="#84314a"/>
<rect x="416" y="250" width="3" height="5" fill="#9c9eaa"/>
<rect x="420" y="244" width="1" height="6" fill="#84314a"/>
<rect x="419" y="244" width="3" height="4" fill="#9c9eaa"/>
<rect x="423" y="238" width="1" height="22" fill="#84314a"/>
<rect x="422" y="241" width="3" height="18" fill="#9c9eaa"/>
<rect x="426" y="267" width="1" height="20" fill="#84314a"/>
<rect x="425" y="269" width="3" height="15" fill="#9c9eaa"/>
<rect x="429" y="318" width="1" height="21" fill="#2f6f5a"/>
<rect x="428" y="324" width="3" height="10" fill="#9c9eaa"/>
<rect x="432" y="290" width="1" height="32" fill="#84314a"/>
<rect x="431" y="317" width="3" height="5" fill="#ff9800"/>
<rect x="435" y="303" width="1" height="38" fill="#84314a"/>
<rect x="434" y="310" width="3" height="27" fill="#9c9eaa"/>
<rect x="438" y="351" width="1" height="38" fill="#84314a"/>
<rect x="437" y="354" width="3" height="32" fill="#9c9eaa"/>
<rect x="442" y="367" width="1" height="32" fill="#84314a"/>
<rect x="441" y="368" width="3" height="31" fill="#9c9eaa"/>
<rect x="445" y="400" width="1" height="36" fill="#2f6f5a"/>
<rect x="444" y="402" width="3" height="30" fill="#9c9eaa"/>
<rect x="448" y="402" width="1" height="11" fill="#84314a"/>
<rect x="447" y="406" width="3" height="6" fill="#9c9eaa"/>
<rect x="451" y="402" width="1" height="35" fill="#84314a"/>
<rect x="450" y="408" width="3" height="27" fill="#9c9eaa"/>
<rect x="454" y="422" width="1" height="14" fill="#84314a"/>
<rect x="453" y="426" width="3" height="7" fill="#9c9eaa"/>
<rect x="457" y="406" width="1" height="14" fill="#2f6f5a"/>
<rect x="456" y="409" width="3" height="7" fill="#9c9eaa"/>
<rect x="460" y="410" width="1" height="16" fill="#2f6f5a"/>
<rect x="459" y="415" width="3" height="9" fill="#9c9eaa"/>
<rect x="463" y="378" width="1" height="30" fill="#2f6f5a"/>
<rect x="462" y="383" width="3" height="23" fill="#9c9eaa"/>
<rect x="466" y="346" width="1" height="34" fill="#2f6f5a"/>
<rect x="465" y="365" width="3" height="14" fill="#9c9eaa"/>
<rect x="469" y="360" width="1" height="8" fill="#2f6f5a"/>
<rect x="468" y="365" width="3" height="3" fill="#9c9eaa"/>
<rect x="472" y="366" width="1" height="19" fill="#84314a"/>
<rect x="471" y="368" width="3" height="13" fill="#9c9eaa"/>
<rect x="475" y="376" width="1" height="10" fill="#2f6f5a"/>
<rect x="474" y="376" width="3" height="5" fill="#9c9eaa"/>
<rect x="478" y="369" width="1" height="5" fill="#84314a"/>
<rect x="477" y="369" width="3" height="2" fill="#9c9eaa"/>
<rect x="482" y="372" width="1" height="6" fill="#2f6f5a"/>
<rect x="481" y="373" width="3" height="2" fill="#9c9eaa"/>
<rect x="485" y="361" width="1" height="12" fill="#2f6f5a"/>
<rect x="484" y="364" width="3" height="9" fill="#9c9eaa"/>
<rect x="488" y="358" width="1" height="12" fill="#2f6f5a"/>
<rect x="487" y="361" width="3" height="6" fill="#9c9eaa"/>
<rect x="491" y="336" width="1" height="22" fill="#2f6f5a"/>
<rect x="490" y="337" width="3" height="21" fill="#9c9eaa"/>
<rect x="494" y="324" width="1" height="8" fill="#2f6f5a"/>
<rect x="493" y="325" width="3" height="2" fill="#9c9eaa"/>
<rect x="497" y="318" width="1" height="10" fill="#2f6f5a"/>
<rect x="496" y="323" width="3" height="1" fill="#9c9eaa"/>
<rect x="500" y="300" width="1" height="23" fill="#2f6f5a"/>
<rect x="499" y="304" width="3" height="14" fill="#9c9eaa"/>
<rect x="503" y="279" width="1" height="13" fill="#84314a"/>
<rect x="502" y="284" width="3" height="6" fill="#9c9eaa"/>
<rect x="506" y="286" width="1" height="16" fill="#2f6f5a"/>
<rect x="505" y="289" width="3" height="11" fill="#9c9eaa"/>
<rect x="509" y="293" width="1" height="9" fill="#84314a"/>
<rect x="508" y="296" width="3" height="3" fill="#9c9eaa"/>
<rect x="512" y="284" width="1" height="10" fill="#2f6f5a"/>
<rect x="511" y="285" width="3" height="3" fill="#9c9eaa"/>
<rect x="515" y="280" width="1" height="10" fill="#84314a"/>
<rect x="514" y="282" width="3" height="6" fill="#9c9eaa"/>
<rect x="518" y="294" width="1" height="7" fill="#84314a"/>
<rect x="517" y="294" width="3" height="2" fill="#9c9eaa"/>
<rect x="522" y="277" width="1" height="17" fill="#2f6f5a"/>
<rect x="521" y="280" width="3" height="12" fill="#9c9eaa"/>
<rect x="525" y="269" width="1" height="9" fill="#2f6f5a"/>
<rect x="524" y="270" width="3" height="7" fill="#9c9eaa"/>
<rect x="528" y="271" width="1" height="13" fill="#84314a"/>
<rect x="527" y="272" width="3" height="10" fill="#9c9eaa"/>
<rect x="531" y="270" width="1" height="15" fill="#2f6f5a"/>
<rect x="530" y="275" width="3" height="5" fill="#9c9eaa"/>
<rect x="534" y="269" width="1" height="14" fill="#84314a"/>
<rect x="533" y="271" width="3" height="8" fill="#9c9eaa"/>
<rect x="537" y="248" width="1" height="27" fill="#2f6f5a"/>
<rect x="536" y="250" width="3" height="19" fill="#9c9eaa"/>
<rect x="540" y="239" width="1" height="23" fill="#84314a"/>
<rect x="539" y="247" width="3" height="15" fill="#9c9eaa"/>
<rect x="543" y="264" width="1" height="12" fill="#84314a"/>
<rect x="542" y="265" width="3" height="8" fill="#9c9eaa"/>
<rect x="546" y="254" width="1" height="22" fill="#2f6f5a"/>
<rect x="545" y="257" width="3" height="16" fill="#9c9eaa"/>
<rect x="549" y="269" width="1" height="6" fill="#84314a"/>
<rect x="548" y="272" width="3" height="1" fill="#9c9eaa"/>
<rect x="552" y="267" width="1" height="6" fill="#2f6f5a"/>
<rect x="551" y="269" width="3" height="2" fill="#9c9eaa"/>
<rect x="555" y="265" width="1" height="7" fill="#2f6f5a"/>
<rect x="554" y="268" width="3" height="2" fill="#9c9eaa"/>
<rect x="558" y="264" width="1" height="17" fill="#84314a"/>
<rect x="557" y="268" width="3" height="10" fill="#9c9eaa"/>
<rect x="562" y="271" width="1" height="19" fill="#84314a"/>
<rect x="561" y="277" width="3" height="7" fill="#9c9eaa"/>
<rect x="565" y="294" width="1" height="21" fill="#84314a"/>
<rect x="564" y="308" width="3" height="4" fill="#9c9eaa"/>
<rect x="568" y="317" width="1" height="32" fill="#84314a"/>
<rect x="567" y="317" width="3" height="16" fill="#9c9eaa"/>
<rect x="571" y="326" width="1" height="3" fill="#84314a"/>
<rect x="570" y="326" width="3" height="2" fill="#9c9eaa"/>
<rect x="574" y="297" width="1" height="28" fill="#84314a"/>
<rect x="573" y="299" width="3" height="21" fill="#9c9eaa"/>
<rect x="577" y="282" width="1" height="20" fill="#84314a"/>
<rect x="576" y="290" width="3" height="2" fill="#9c9eaa"/>
<rect x="580" y="287" width="1" height="8" fill="#2f6f5a"/>
<rect x="579" y="290" width="3" height="3" fill="#9c9eaa"/>
<rect x="583" y="291" width="1" height="7" fill="#2f6f5a"/>
<rect x="582" y="293" width="3" height="3" fill="#9c9eaa"/>
<rect x="586" y="292" width="1" height="13" fill="#84314a"/>
<rect x="585" y="295" width="3" height="4" fill="#9c9eaa"/>
<rect x="589" y="289" width="1" height="9" fill="#2f6f5a"/>
<rect x="588" y="294" width="3" height="1" fill="#9c9eaa"/>
<rect x="592" y="292" width="1" height="4" fill="#2f6f5a"/>
<rect x="591" y="292" width="3" height="3" fill="#9c9eaa"/>
<rect x="595" y="287" width="1" height="18" fill="#84314a"/>
<rect x="594" y="290" width="3" height="13" fill="#9c9eaa"/>
<rect x="598" y="296" width="1" height="14" fill="#2f6f5a"/>
<rect x="597" y="299" width="3" height="9" fill="#9c9eaa"/>
<rect x="602" y="312" width="1" height="11" fill="#2f6f5a"/>
<rect x="601" y="315" width="3" height="8" fill="#ff0000"/>
<rect x="605" y="314" width="1" height="11" fill="#84314a"/>
<rect x="604" y="316" width="3" height="9" fill="#9c9eaa"/>
<rect x="608" y="311" width="1" height="14" fill="#2f6f5a"/>
<rect x="607" y="315" width="3" height="7" fill="#ff0000"/>
<rect x="611" y="288" width="1" height="28" fill="#84314a"/>
<rect x="610" y="291" width="3" height="24" fill="#9c9eaa"/>
<rect x="614" y="287" width="1" height="12" fill="#2f6f5a"/>
<rect x="613" y="292" width="3" height="1" fill="#9c9eaa"/>
<rect x="617" y="281" width="1" height="17" fill="#2f6f5a"/>
<rect x="616" y="293" width="3" height="1" fill="#9c9eaa"/>
<rect x="620" y="289" width="1" height="13" fill="#84314a"/>
<rect x="619" y="293" width="3" height="3" fill="#9c9eaa"/>
<rect x="623" y="288" width="1" height="25" fill="#2f6f5a"/>
<rect x="622" y="294" width="3" height="18" fill="#ff9800"/>
<rect x="626" y="304" width="1" height="16" fill="#84314a"/>
<rect x="625" y="308" width="3" height="9" fill="#9c9eaa"/>
<rect x="629" y="320" width="1" height="13" fill="#84314a"/>
<rect x="628" y="323" width="3" height="7" fill="#9c9eaa"/>
<rect x="632" y="324" width="1" height="15" fill="#84314a"/>
<rect x="631" y="324" width="3" height="12" fill="#9c9eaa"/>
<rect x="635" y="318" width="1" height="18" fill="#2f6f5a"/>
<rect x="634" y="321" width="3" height="11" fill="#9c9eaa"/>
<rect x="638" y="303" width="1" height="12" fill="#2f6f5a"/>
<rect x="637" y="306" width="3" height="7" fill="#9c9eaa"/>
<rect x="642" y="299" width="1" height="10" fill="#2f6f5a"/>
<rect x="641" y="303" width="3" height="4" fill="#9c9eaa"/>
<rect x="645" y="297" width="1" height="13" fill="#2f6f5a"/>
<rect x="644" y="301" width="3" height="7" fill="#9c9eaa"/>
<rect x="648" y="299" width="1" height="10" fill="#2f6f5a"/>
<rect x="647" y="300" width="3" height="5" fill="#9c9eaa"/>
<rect x="651" y="300" width="1" height="10" fill="#84314a"/>
<rect x="650" y="303" width="3" height="2" fill="#9c9eaa"/>
<rect x="654" y="298" width="1" height="10" fill="#2f6f5a"/>
<rect x="653" y="300" width="3" height="8" fill="#9c9eaa"/>
<rect x="657" y="306" width="1" height="15" fill="#2f6f5a"/>
<rect x="656" y="308" width="3" height="9" fill="#9c9eaa"/>
<rect x="660" y="314" width="1" height="17" fill="#2f6f5a"/>
<rect x="659" y="317" width="3" height="8" fill="#9c9eaa"/>
<rect x="663" y="317" width="1" height="9" fill="#2f6f5a"/>
<rect x="662" y="320" width="3" height="3" fill="#9c9eaa"/>
<rect x="666" y="317" width="1" height="6" fill="#84314a"/>
<rect x="665" y="319" width="3" height="3" fill="#9c9eaa"/>
<rect x="669" y="306" width="1" height="15" fill="#84314a"/>
<rect x="668" y="311" width="3" height="8" fill="#9c9eaa"/>
<rect x="672" y="309" width="1" height="13" fill="#2f6f5a"/>
<rect x="671" y="309" width="3" height="8" fill="#9c9eaa"/>
<rect x="675" y="304" width="1" height="14" fill="#2f6f5a"/>
<rect x="674" y="308" width="3" height="9" fill="#9c9eaa"/>
<rect x="678" y="306" width="1" height="7" fill="#2f6f5a"/>
<rect x="677" y="308" width="3" height="3" fill="#9c9eaa"/>
<rect x="682" y="299" width="1" height="13" fill="#2f6f5a"/>
<rect x="681" y="301" width="3" height="6" fill="#9c9eaa"/>
<rect x="685" y="297" width="1" height="13" fill="#2f6f5a"/>
<rect x="684" y="299" width="3" height="11" fill="#9c9eaa"/>
<rect x="688" y="305" width="1" height="10" fill="#84314a"/>
<rect x="687" y="311" width="3" height="2" fill="#9c9eaa"/>
<rect x="691" y="311" width="1" height="11" fill="#84314a"/>
<rect x="690" y="312" width="3" height="8" fill="#9c9eaa"/>
<rect x="694" y="308" width="1" height="14" fill="#84314a"/>
<rect x="693" y="310" width="3" height="12" fill="#9c9eaa"/>
<rect x="697" y="308" width="1" height="4" fill="#2f6f5a"/>
<rect x="696" y="308" width="3" height="1" fill="#9c9eaa"/>
<rect x="700" y="300" width="1" height="18" fill="#84314a"/>
<rect x="699" y="305" width="3" height="7" fill="#9c9eaa"/>
<rect x="703" y="301" width="1" height="12" fill="#2f6f5a"/>
<rect x="702" y="304" width="3" height="5" fill="#9c9eaa"/>
<rect x="706" y="303" width="1" height="8" fill="#2f6f5a"/>
<rect x="705" y="305" width="3" height="2" fill="#9c9eaa"/>
<rect x="709" y="299" width="1" height="12" fill="#2f6f5a"/>
<rect x="708" y="302" width="3" height="4" fill="#9c9eaa"/>
<rect x="712" y="293" width="1" height="11" fill="#2f6f5a"/>
<rect x="711" y="295" width="3" height="9" fill="#9c9eaa"/>
<rect x="715" y="288" width="1" height="12" fill="#84314a"/>
<rect x="714" y="293" width="3" height="2" fill="#9c9eaa"/>
<rect x="718" y="288" width="1" height="14" fill="#84314a"/>
<rect x="717" y="293" width="3" height="7" fill="#9c9eaa"/>
<rect x="722" y="295" width="1" height="8" fill="#84314a"/>
<rect x="721" y="299" width="3" height="3" fill="#9c9eaa"/>
<rect x="725" y="300" width="1" height="13" fill="#2f6f5a"/>
<rect x="724" y="303" width="3" height="6" fill="#9c9eaa"/>
<rect x="728" y="302" width="1" height="14" fill="#84314a"/>
<rect x="727" y="307" width="3" height="3" fill="#9c9eaa"/>
<rect x="731" y="308" width="1" height="5" fill="#84314a"/>
<rect x="730" y="308" width="3" height="5" fill="#9c9eaa"/>
<rect x="734" y="309" width="1" height="6" fill="#84314a"/>
<rect x="733" y="310" width="3" height="2" fill="#9c9eaa"/>
<rect x="737" y="304" width="1" height="8" fill="#2f6f5a"/>
<rect x="736" y="310" width="3" height="1" fill="#9c9eaa"/>
<rect x="740" y="306" width="1" height="16" fill="#2f6f5a"/>
<rect x="739" y="312" width="3" height="6" fill="#9c9eaa"/>
<rect x="743" y="306" width="1" height="11" fill="#2f6f5a"/>
<rect x="742" y="308" width="3" height="9" fill="#9c9eaa"/>
<rect x="746" y="304" width="1" height="6" fill="#2f6f5a"/>
<rect x="745" y="305" width="3" height="3" fill="#9c9eaa"/>
<rect x="749" y="293" width="1" height="19" fill="#84314a"/>
<rect x="748" y="298" width="3" height="11" fill="#9c9eaa"/>
<rect x="752" y="297" width="1" height="6" fill="#2f6f5a"/>
<rect x="751" y="299" width="3" height="2" fill="#9c9eaa"/>
<rect x="755" y="298" width="1" height="12" fill="#2f6f5a"/>
<rect x="754" y="301" width="3" height="6" fill="#9c9eaa"/>
<rect x="758" y="293" width="1" height="11" fill="#84314a"/>
<rect x="757" y="296" width="3" height="3" fill="#9c9eaa"/>
<rect x="762" y="287" width="1" height="21" fill="#2f6f5a"/>
<rect x="761" y="293" width="3" height="10" fill="#9c9eaa"/>
<rect x="765" y="287" width="1" height="11" fill="#2f6f5a"/>
<rect x="764" y="290" width="3" height="2" fill="#9c9eaa"/>
<rect x="768" y="290" width="1" height="4" fill="#84314a"/>
<rect x="767" y="293" width="3" height="1" fill="#9c9eaa"/>
<rect x="771" y="288" width="1" height="7" fill="#84314a"/>
<rect x="770" y="292" width="3" height="1" fill="#9c9eaa"/>
<rect x="774" y="288" width="1" height="8" fill="#2f6f5a"/>
<rect x="773" y="291" width="3" height="2" fill="#9c9eaa"/>
<rect x="777" y="289" width="1" height="11" fill="#84314a"/>
<rect x="776" y="291" width="3" height="6" fill="#9c9eaa"/>
<rect x="780" y="286" width="1" height="11" fill="#2f6f5a"/>
<rect x="779" y="292" width="3" height="5" fill="#9c9eaa"/>
<rect x="783" y="298" width="1" height="18" fill="#84314a"/>
<rect x="782" y="301" width="3" height="10" fill="#ff9800"/>
<rect x="786" y="304" width="1" height="13" fill="#84314a"/>
<rect x="785" y="305" width="3" height="9" fill="#ff9800"/>
<rect x="789" y="304" width="1" height="10" fill="#84314a"/>
<rect x="788" y="308" width="3" height="3" fill="#9c9eaa"/>
<rect x="792" y="305" width="1" height="8" fill="#84314a"/>
<rect x="791" y="308" width="3" height="3" fill="#9c9eaa"/>
<rect x="795" y="310" width="1" height="8" fill="#84314a"/>
<rect x="794" y="311" width="3" height="2" fill="#9c9eaa"/>
<rect x="798" y="311" width="1" height="10" fill="#84314a"/>
<rect x="797" y="311" width="3" height="7" fill="#9c9eaa"/>
<rect x="802" y="314" width="1" height="12" fill="#84314a"/>
<rect x="801" y="317" width="3" height="6" fill="#ff9800"/>
<rect x="805" y="315" width="1" height="6" fill="#2f6f5a"/>
<rect x="804" y="318" width="3" height="3" fill="#ff0000"/>
<rect x="808" y="310" width="1" height="11" fill="#2f6f5a"/>
<rect x="807" y="312" width="3" height="7" fill="#9c9eaa"/>
<rect x="811" y="301" width="1" height="15" fill="#2f6f5a"/>
<rect x="810" y="305" width="3" height="7" fill="#9c9eaa"/>
<rect x="814" y="301" width="1" height="4" fill="#2f6f5a"/>
<rect x="813" y="301" width="3" height="2" fill="#ff9800"/>
<rect x="817" y="300" width="1" height="9" fill="#84314a"/>
<rect x="816" y="300" width="3" height="9" fill="#9c9eaa"/>
<rect x="820" y="291" width="1" height="9" fill="#84314a"/>
<rect x="819" y="294" width="3" height="3" fill="#9c9eaa"/>
<rect x="823" y="279" width="1" height="20" fill="#84314a"/>
<rect x="822" y="282" width="3" height="11" fill="#ff9800"/>
<rect x="826" y="280" width="1" height="11" fill="#2f6f5a"/>
<rect x="825" y="283" width="3" height="6" fill="#9c9eaa"/>
<rect x="829" y="285" width="1" height="17" fill="#84314a"/>
<rect x="828" y="290" width="3" height="10" fill="#9c9eaa"/>
<rect x="832" y="301" width="1" height="18" fill="#2f6f5a"/>
<rect x="831" y="303" width="3" height="14" fill="#ff0000"/>
<rect x="835" y="311" width="1" height="11" fill="#84314a"/>
<rect x="834" y="312" width="3" height="8" fill="#9c9eaa"/>
<rect x="838" y="314" width="1" height="12" fill="#84314a"/>
<rect x="837" y="317" width="3" height="5" fill="#9c9eaa"/>
<rect x="842" y="317" width="1" height="3" fill="#2f6f5a"/>
<rect x="841" y="317" width="3" height="3" fill="#9c9eaa"/>
<rect x="845" y="308" width="1" height="18" fill="#84314a"/>
<rect x="844" y="314" width="3" height="9" fill="#9c9eaa"/>
<rect x="848" y="307" width="1" height="13" fill="#2f6f5a"/>
<rect x="847" y="312" width="3" height="2" fill="#9c9eaa"/>
<rect x="851" y="311" width="1" height="27" fill="#84314a"/>
<rect x="850" y="313" width="3" height="23" fill="#9c9eaa"/>
<rect x="854" y="335" width="1" height="3" fill="#84314a"/>
<rect x="853" y="335" width="3" height="3" fill="#9c9eaa"/>
<rect x="857" y="326" width="1" height="20" fill="#84314a"/>
<rect x="856" y="330" width="3" height="14" fill="#9c9eaa"/>
<rect x="860" y="344" width="1" height="6" fill="#84314a"/>
<rect x="859" y="344" width="3" height="5" fill="#9c9eaa"/>
<rect x="863" y="341" width="1" height="18" fill="#2f6f5a"/>
<rect x="862" y="347" width="3" height="10" fill="#9c9eaa"/>
<rect x="866" y="350" width="1" height="14" fill="#2f6f5a"/>
<rect x="865" y="352" width="3" height="6" fill="#9c9eaa"/>
<rect x="869" y="346" width="1" height="24" fill="#84314a"/>
<rect x="868" y="352" width="3" height="14" fill="#9c9eaa"/>
<rect x="872" y="355" width="1" height="20" fill="#84314a"/>
<rect x="871" y="357" width="3" height="12" fill="#9c9eaa"/>
<rect x="875" y="350" width="1" height="6" fill="#2f6f5a"/>
<rect x="874" y="353" width="3" height="3" fill="#9c9eaa"/>
<rect x="878" y="348" width="1" height="15" fill="#84314a"/>
<rect x="877" y="353" width="3" height="4" fill="#9c9eaa"/>
<rect x="882" y="344" width="1" height="11" fill="#84314a"/>
<rect x="881" y="348" width="3" height="2" fill="#9c9eaa"/>
<rect x="885" y="340" width="1" height="11" fill="#84314a"/>
<rect x="884" y="345" width="3" height="4" fill="#9c9eaa"/>
<rect x="888" y="342" width="1" height="7" fill="#2f6f5a"/>
<rect x="887" y="343" width="3" height="3" fill="#9c9eaa"/>
<rect x="891" y="342" width="1" height="5" fill="#2f6f5a"/>
<rect x="890" y="342" width="3" height="4" fill="#9c9eaa"/>
<rect x="894" y="340" width="1" height="9" fill="#84314a"/>
<rect x="893" y="343" width="3" height="6" fill="#9c9eaa"/>
<rect x="897" y="338" width="1" height="20" fill="#84314a"/>
<rect x="896" y="344" width="3" height="10" fill="#9c9eaa"/>
<rect x="900" y="347" width="1" height="11" fill="#84314a"/>
<rect x="899" y="353" width="3" height="2" fill="#9c9eaa"/>
<rect x="903" y="351" width="1" height="5" fill="#84314a"/>
<rect x="902" y="353" width="3" height="2" fill="#9c9eaa"/>
<rect x="906" y="357" width="1" height="9" fill="#84314a"/>
<rect x="905" y="357" width="3" height="7" fill="#9c9eaa"/>
<rect x="909" y="357" width="1" height="7" fill="#84314a"/>
<rect x="908" y="359" width="3" height="3" fill="#9c9eaa"/>
<rect x="912" y="349" width="1" height="10" fill="#2f6f5a"/>
<rect x="911" y="352" width="3" height="5" fill="#9c9eaa"/>
<rect x="915" y="351" width="1" height="20" fill="#84314a"/>
<rect x="914" y="354" width="3" height="15" fill="#9c9eaa"/>
<rect x="918" y="359" width="1" height="17" fill="#84314a"/>
<rect x="917" y="365" width="3" height="6" fill="#9c9eaa"/>
<rect x="922" y="363" width="1" height="12" fill="#84314a"/>
<rect x="921" y="369" width="3" height="6" fill="#9c9eaa"/>
<rect x="925" y="370" width="1" height="8" fill="#84314a"/>
<rect x="924" y="374" width="3" height="2" fill="#9c9eaa"/>
<rect x="928" y="376" width="1" height="17" fill="#84314a"/>
<rect x="927" y="379" width="3" height="12" fill="#9c9eaa"/>
<rect x="931" y="386" width="1" height="19" fill="#84314a"/>
<rect x="930" y="387" width="3" height="16" fill="#9c9eaa"/>
<rect x="934" y="399" width="1" height="5" fill="#2f6f5a"/>
<rect x="933" y="399" width="3" height="4" fill="#9c9eaa"/>
<rect x="937" y="393" width="1" height="17" fill="#84314a"/>
<rect x="936" y="395" width="3" height="12" fill="#9c9eaa"/>
<rect x="940" y="396" width="1" height="13" fill="#84314a"/>
<rect x="939" y="396" width="3" height="13" fill="#9c9eaa"/>
<rect x="943" y="384" width="1" height="13" fill="#84314a"/>
<rect x="942" y="384" width="3" height="12" fill="#9c9eaa"/>
<rect x="946" y="378" width="1" height="9" fill="#2f6f5a"/>
<rect x="945" y="379" width="3" height="5" fill="#9c9eaa"/>
<rect x="949" y="374" width="1" height="16" fill="#2f6f5a"/>
<rect x="948" y="380" width="3" height="9" fill="#9c9eaa"/>
<rect x="952" y="372" width="1" height="17" fill="#2f6f5a"/>
<rect x="951" y="376" width="3" height="12" fill="#ff9800"/>
<rect x="955" y="384" width="1" height="6" fill="#84314a"/>
<rect x="954" y="386" width="3" height="3" fill="#9c9eaa"/>
<rect x="959" y="362" width="1" height="25" fill="#84314a"/>
<rect x="958" y="363" width="3" height="21" fill="#9c9eaa"/>
<rect x="962" y="354" width="1" height="12" fill="#2f6f5a"/>
<rect x="961" y="356" width="3" height="9" fill="#ff9800"/>
<rect x="965" y="347" width="1" height="10" fill="#2f6f5a"/>
<rect x="964" y="349" width="3" height="5" fill="#9c9eaa"/>
<rect x="968" y="345" width="1" height="8" fill="#2f6f5a"/>
<rect x="967" y="349" width="3" height="1" fill="#9c9eaa"/>
<rect x="971" y="340" width="1" height="13" fill="#84314a"/>
<rect x="970" y="343" width="3" height="7" fill="#9c9eaa"/>
<rect x="974" y="326" width="1" height="16" fill="#84314a"/>
<rect x="973" y="329" width="3" height="10" fill="#9c9eaa"/>
<rect x="977" y="322" width="1" height="17" fill="#2f6f5a"/>
<rect x="976" y="328" width="3" height="6" fill="#9c9eaa"/>
<rect x="980" y="329" width="1" height="7" fill="#2f6f5a"/>
<rect x="979" y="329" width="3" height="3" fill="#9c9eaa"/>
<rect x="983" y="324" width="1" height="16" fill="#2f6f5a"/>
<rect x="982" y="330" width="3" height="9" fill="#9c9eaa"/>
<rect x="986" y="325" width="1" height="16" fill="#2f6f5a"/>
<rect x="985" y="325" width="3" height="10" fill="#9c9eaa"/>
<rect x="989" y="322" width="1" height="5" fill="#2f6f5a"/>
<rect x="988" y="323" width="3" height="1" fill="#9c9eaa"/>
<rect x="992" y="293" width="1" height="38" fill="#84314a"/>
<rect x="991" y="293" width="3" height="32" fill="#ff9800"/>
<rect x="995" y="292" width="1" height="7" fill="#2f6f5a"/>
<rect x="994" y="292" width="3" height="7" fill="#9c9eaa"/>
<rect x="999" y="293" width="1" height="8" fill="#2f6f5a"/>
<rect x="998" y="294" width="3" height="2" fill="#9c9eaa"/>
<rect x="1002" y="289" width="1" height="14" fill="#2f6f5a"/>
<rect x="1001" y="291" width="3" height="7" fill="#9c9eaa"/>
<rect x="1005" y="283" width="1" height="15" fill="#2f6f5a"/>
<rect x="1004" y="289" width="3" height="6" fill="#9c9eaa"/>
<rect x="1008" y="271" width="1" height="15" fill="#2f6f5a"/>
<rect x="1007" y="273" width="3" height="10" fill="#9c9eaa"/>
<rect x="1011" y="258" width="1" height="22" fill="#2f6f5a"/>
<rect x="1010" y="260" width="3" height="15" fill="#9c9eaa"/>
<rect x="1014" y="251" width="1" height="14" fill="#84314a"/>
<rect x="1013" y="252" width="3" height="8" fill="#9c9eaa"/>
<rect x="1017" y="239" width="1" height="14" fill="#2f6f5a"/>
<rect x="1016" y="245" width="3" height="7" fill="#9c9eaa"/>
<rect x="1020" y="242" width="1" height="6" fill="#2f6f5a"/>
<rect x="1019" y="245" width="3" height="2" fill="#9c9eaa"/>
<rect x="1023" y="235" width="1" height="8" fill="#2f6f5a"/>
<rect x="1022" y="239" width="3" height="3" fill="#9c9eaa"/>
<rect x="1026" y="226" width="1" height="19" fill="#2f6f5a"/>
<rect x="1025" y="226" width="3" height="16" fill="#9c9eaa"/>
<rect x="1029" y="221" width="1" height="10" fill="#2f6f5a"/>
<rect x="1028" y="224" width="3" height="3" fill="#9c9eaa"/>
<rect x="1032" y="215" width="1" height="15" fill="#2f6f5a"/>
<rect x="1031" y="221" width="3" height="7" fill="#9c9eaa"/>
<rect x="1035" y="212" width="1" height="19" fill="#2f6f5a"/>
<rect x="1034" y="214" width="3" height="12" fill="#9c9eaa"/>
<rect x="1039" y="212" width="1" height="12" fill="#84314a"/>
<rect x="1038" y="212" width="3" height="9" fill="#9c9eaa"/>
<rect x="1042" y="212" width="1" height="14" fill="#84314a"/>
<rect x="1041" y="218" width="3" height="6" fill="#9c9eaa"/>
<rect x="1045" y="211" width="1" height="15" fill="#2f6f5a"/>
<rect x="1044" y="216" width="3" height="4" fill="#9c9eaa"/>
<rect x="1048" y="219" width="1" height="16" fill="#84314a"/>
<rect x="1047" y="221" width="3" height="9" fill="#9c9eaa"/>
<rect x="1051" y="237" width="1" height="33" fill="#84314a"/>
<rect x="1050" y="237" width="3" height="6" fill="#ff0000"/>
<rect x="1054" y="231" width="1" height="13" fill="#2f6f5a"/>
<rect x="1053" y="233" width="3" height="9" fill="#9c9eaa"/>
<rect x="1057" y="231" width="1" height="11" fill="#2f6f5a"/>
<rect x="1056" y="233" width="3" height="3" fill="#9c9eaa"/>
<rect x="1060" y="230" width="1" height="8" fill="#84314a"/>
<rect x="1059" y="233" width="3" height="3" fill="#ffffff"/>
<rect x="1063" y="227" width="1" height="10" fill="#2f6f5a"/>
<rect x="1062" y="229" width="3" height="5" fill="#9c9eaa"/>
<rect x="1066" y="224" width="1" height="7" fill="#2f6f5a"/>
<rect x="1065" y="227" width="3" height="2" fill="#9c9eaa"/>
<rect x="1069" y="226" width="1" height="9" fill="#84314a"/>
<rect x="1068" y="228" width="3" height="4" fill="#9c9eaa"/>
<rect x="1072" y="228" width="1" height="6" fill="#84314a"/>
<rect x="1071" y="229" width="3" height="3" fill="#ffffff"/>
<rect x="1075" y="224" width="1" height="8" fill="#2f6f5a"/>
<rect x="1074" y="225" width="3" height="5" fill="#9c9eaa"/>
<rect x="1079" y="225" width="1" height="11" fill="#84314a"/>
<rect x="1078" y="227" width="3" height="6" fill="#9c9eaa"/>
<rect x="1082" y="207" width="1" height="20" fill="#2f6f5a"/>
<rect x="1081" y="211" width="3" height="13" fill="#9c9eaa"/>
<rect x="1085" y="196" width="1" height="16" fill="#84314a"/>
<rect x="1084" y="197" width="3" height="12" fill="#9c9eaa"/>
<rect x="1088" y="192" width="1" height="18" fill="#2f6f5a"/>
<rect x="1087" y="196" width="3" height="9" fill="#9c9eaa"/>
<rect x="1091" y="206" width="1" height="21" fill="#2f6f5a"/>
<rect x="1090" y="210" width="3" height="13" fill="#9c9eaa"/>
<rect x="1094" y="213" width="1" height="11" fill="#84314a"/>
<rect x="1093" y="219" width="3" height="2" fill="#9c9eaa"/>
<rect x="1097" y="216" width="1" height="17" fill="#84314a"/>
<rect x="1096" y="218" width="3" height="12" fill="#9c9eaa"/>
<rect x="1100" y="224" width="1" height="5" fill="#84314a"/>
<rect x="1099" y="228" width="3" height="1" fill="#9c9eaa"/>
<rect x="1103" y="220" width="1" height="26" fill="#84314a"/>
<rect x="1102" y="224" width="3" height="18" fill="#9c9eaa"/>
<rect x="1106" y="232" width="1" height="14" fill="#84314a"/>
<rect x="1105" y="234" width="3" height="10" fill="#9c9eaa"/>
<rect x="1109" y="225" width="1" height="11" fill="#2f6f5a"/>
<rect x="1108" y="230" width="3" height="2" fill="#9c9eaa"/>
<rect x="1112" y="227" width="1" height="8" fill="#2f6f5a"/>
<rect x="1111" y="228" width="3" height="3" fill="#9c9eaa"/>
<rect x="1115" y="220" width="1" height="11" fill="#2f6f5a"/>
<rect x="1114" y="224" width="3" height="5" fill="#9c9eaa"/>
<rect x="1119" y="220" width="1" height="14" fill="#2f6f5a"/>
<rect x="1118" y="224" width="3" height="5" fill="#9c9eaa"/>
<rect x="1122" y="218" width="1" height="28" fill="#84314a"/>
<rect x="1121" y="222" width="3" height="18" fill="#9c9eaa"/>
<rect x="1125" y="238" width="1" height="7" fill="#84314a"/>
<rect x="1124" y="240" width="3" height="2" fill="#9c9eaa"/>
<rect x="1128" y="237" width="1" height="20" fill="#84314a"/>
<rect x="1127" y="241" width="3" height="11" fill="#9c9eaa"/>
<rect x="1131" y="242" width="1" height="21" fill="#84314a"/>
<rect x="1130" y="243" width="3" height="20" fill="#9c9eaa"/>
<rect x="1134" y="249" width="1" height="7" fill="#2f6f5a"/>
<rect x="1133" y="251" width="3" height="3" fill="#9c9eaa"/>
<rect x="1137" y="243" width="1" height="10" fill="#2f6f5a"/>
<rect x="1136" y="245" width="3" height="2" fill="#9c9eaa"/>
<rect x="1140" y="235" width="1" height="18" fill="#2f6f5a"/>
<rect x="1139" y="240" width="3" height="7" fill="#9c9eaa"/>
<rect x="1143" y="239" width="1" height="16" fill="#84314a"/>
<rect x="1142" y="244" width="3" height="5" fill="#9c9eaa"/>
<rect x="1146" y="234" width="1" height="20" fill="#84314a"/>
<rect x="1145" y="237" width="3" height="11" fill="#9c9eaa"/>
<rect x="1149" y="227" width="1" height="13" fill="#2f6f5a"/>
<rect x="1148" y="232" width="3" height="6" fill="#9c9eaa"/>
<rect x="1152" y="215" width="1" height="22" fill="#2f6f5a"/>
<rect x="1151" y="217" width="3" height="16" fill="#9c9eaa"/>
<rect x="1155" y="199" width="1" height="21" fill="#2f6f5a"/>
<rect x="1154" y="204" width="3" height="9" fill="#ff9800"/>
<rect x="1159" y="188" width="1" height="18" fill="#84314a"/>
<rect x="1158" y="201" width="3" height="2" fill="#9c9eaa"/>
<rect x="1162" y="193" width="1" height="11" fill="#2f6f5a"/>
<rect x="1161" y="197" width="3" height="3" fill="#9c9eaa"/>
<rect x="1165" y="196" width="1" height="11" fill="#2f6f5a"/>
<rect x="1164" y="199" width="3" height="7" fill="#9c9eaa"/>
<rect x="1168" y="181" width="1" height="18" fill="#2f6f5a"/>
<rect x="1167" y="181" width="3" height="16" fill="#9c9eaa"/>
<rect x="1171" y="153" width="1" height="27" fill="#2f6f5a"/>
<rect x="1170" y="177" width="3" height="3" fill="#ff0000"/>
<rect x="1174" y="165" width="1" height="17" fill="#84314a"/>
<rect x="1173" y="167" width="3" height="13" fill="#9c9eaa"/>
<rect x="1177" y="170" width="1" height="11" fill="#2f6f5a"/>
<rect x="1176" y="176" width="3" height="5" fill="#ffffff"/>
</g>
<ellipse cx="1171.3" cy="460.2" rx="9.6" ry="62.8" fill="#46024d" fill-opacity="0.82" stroke="#857a1e" stroke-width="1.2"/>
<rect x="1170" y="405" width="2" height="119" fill="#c4766e" shape-rendering="crispEdges"/>
<rect x="1167" y="498" width="2" height="26" fill="#a8645a" shape-rendering="crispEdges"/>
<rect x="1173" y="496" width="2" height="28" fill="#a8645a" shape-rendering="crispEdges"/>
<circle cx="171.3" cy="508" r="13.6" fill="#000000" stroke="#c8465c" stroke-width="1.6"/>
<text x="171.3" y="512.3" font-size="13" fill="#e0506a" text-anchor="middle" textLength="6.6" lengthAdjust="spacingAndGlyphs">E</text>
<circle cx="442.3" cy="508" r="13.6" fill="#000000" stroke="#c8465c" stroke-width="1.6"/>
<text x="442.3" y="512.3" font-size="13" fill="#e0506a" text-anchor="middle" textLength="6.6" lengthAdjust="spacingAndGlyphs">E</text>
<circle cx="599.3" cy="508" r="13.6" fill="#000000" stroke="#c8465c" stroke-width="1.6"/>
<text x="599.3" y="512.3" font-size="13" fill="#e0506a" text-anchor="middle" textLength="6.6" lengthAdjust="spacingAndGlyphs">E</text>
<circle cx="830.0" cy="508" r="13.6" fill="#000000" stroke="#c8465c" stroke-width="1.6"/>
<text x="830.0" y="512.3" font-size="13" fill="#e0506a" text-anchor="middle" textLength="6.6" lengthAdjust="spacingAndGlyphs">E</text>
<circle cx="983.9" cy="508" r="13.6" fill="#000000" stroke="#c8465c" stroke-width="1.6"/>
<text x="983.9" y="512.3" font-size="13" fill="#e0506a" text-anchor="middle" textLength="6.6" lengthAdjust="spacingAndGlyphs">E</text>
<circle cx="1239.7" cy="508" r="13.6" fill="#000000" stroke="#c8465c" stroke-width="1.6"/>
<text x="1239.7" y="512.3" font-size="13" fill="#e0506a" text-anchor="middle" textLength="6.6" lengthAdjust="spacingAndGlyphs">E</text>
<circle cx="565.8" cy="508" r="13.6" fill="#000000" stroke="#1b7fd6" stroke-width="1.6"/>
<text x="565.8" y="512.3" font-size="13" fill="#1e88e5" text-anchor="middle" textLength="8.7" lengthAdjust="spacingAndGlyphs">D</text>
<polyline fill="none" stroke="#3fa24a" stroke-width="1.15" stroke-linejoin="round" points="7.8,598.1 11.7,592.4 16.9,597.6 23.4,590.3 28.6,592.4 32.5,587.7 36.4,589.3 45.5,571.1 49.4,578.1 55.9,584.6 62.4,591.1 70.2,598.9 74.1,598.9 79.3,605.4 83.2,600.2 89.7,605.4 98.8,612.7 106.1,617.1 112.4,596.3 117.0,601.5 123.5,604.1 128.7,602.8 133.9,596.3 141.7,598.9 146.2,592.9 153.4,599.7 158.6,601.5 161.8,574.2 165.4,571.6 173.0,588.5 177.4,584.1 183.4,593.7 189.3,590.3 196.4,599.7 205.5,602.8 213.3,605.4 218.5,600.7 226.3,608.0 232.8,605.4 238.0,598.9 244.5,601.5 251.0,588.5 257.5,595.0 265.3,599.7 273.1,606.7 282.2,611.9 284.8,604.1 291.3,610.6 296.5,610.1 300.4,595.0 308.2,600.7 314.7,604.1 322.0,572.9 328.2,584.6 338.1,600.2 343.3,601.5 353.7,607.5 362.8,599.7 369.3,598.9 375.8,595.0 382.3,600.2 390.1,596.3 397.8,600.2 405.6,608.0 414.7,614.5 417.3,611.1 423.8,613.7 429.8,617.1 432.9,605.9 439.4,611.9 445.1,614.5 449.3,611.9 454.2,614.5 458.1,604.1 460.7,605.4 466.7,584.6 475.8,592.9 479.7,588.5 486.7,589.3 494.0,570.3 497.2,574.2 503.1,564.3 509.6,575.5 514.8,576.3 520.0,579.9 525.2,573.7 530.4,582.0 534.3,580.7 538.2,573.7 544.7,583.3 552.5,588.5 556.4,587.7 561.7,595.0 566.9,604.1 570.8,608.0 576.0,588.5 585.1,593.7 592.9,591.9 600.7,601.5 608.5,606.7 611.6,589.8 614.2,591.9 617.6,587.2 624.1,596.3 629.3,602.8 634.5,600.7 639.2,591.9 646.2,592.9 652.7,596.3 660.5,600.2 668.3,602.8 670.4,595.5 678.7,598.9 681.8,591.9 687.8,600.2 694.3,598.9 696.9,602.3 700.0,598.9 703.4,596.3 711.2,600.7 716.4,587.7 722.9,595.0 730.7,602.8 738.5,606.7 743.7,607.5 750.2,598.1 754.1,597.1 757.2,598.9 759.3,595.0 765.8,592.4 771.8,598.1 774.9,596.3 780.1,599.7 785.2,608.0 789.1,610.1 793.0,607.5 802.1,612.7 806.0,608.0 808.6,607.5 811.2,594.5 814.3,588.5 819.0,595.0 821.6,592.4 823.7,588.5 829.4,597.6 833.3,604.1 841.1,607.5 845.0,604.9 848.1,604.1 852.8,609.3 860.6,613.2 873.6,617.9 878.8,616.3 884.0,603.3 887.9,604.9 891.3,598.9 897.0,604.1 904.8,609.3 908.7,610.6 912.6,604.9 916.5,608.5 923.0,611.9 934.7,617.9 937.3,613.7 940.7,614.5 943.8,600.2 947.8,595.5 950.4,598.9 953.7,598.1 956.3,600.2 958.2,583.3 962.1,575.5 966.0,580.7 971.2,582.0 974.5,569.0 979.0,574.7 982.9,582.0 986.8,585.9 990.1,585.9 993.3,571.6 999.8,577.3 1007.6,575.5 1015.4,565.1 1018.0,565.1 1023.2,570.3 1027.1,562.5 1030.2,561.2 1032.8,568.5 1036.2,563.8 1039.6,574.7 1045.3,584.6 1049.2,591.1 1051.0,598.1 1057.0,594.5 1060.9,595.0 1063.5,587.7 1067.4,589.3 1072.6,590.3 1075.2,583.3 1078.6,585.9 1081.7,575.5 1085.6,570.3 1088.2,572.9 1090.8,583.3 1096.0,588.5 1101.2,595.0 1107.2,602.3 1109.8,595.0 1114.2,597.1 1118.1,596.3 1123.3,601.5 1129.8,607.5 1137.6,611.1 1142.8,611.1 1146.7,606.7 1150.6,597.6 1155.8,580.7 1159.2,576.8 1164.9,584.1 1167.5,576.8 1171.4,560.7 1175.3,569.0 1177.9,572.9"/>
<polyline fill="none" stroke="#ef3d36" stroke-width="1.15" stroke-linejoin="round" points="7.8,596.3 13.0,602.8 23.4,608.0 26.0,605.9 36.4,611.9 44.2,615.3 48.1,614.5 54.6,615.8 61.1,615.3 63.7,613.7 66.3,614.5 69.7,602.8 72.8,604.1 75.4,592.4 80.6,598.9 88.4,603.3 92.3,576.8 100.1,570.3 104.0,562.5 106.6,563.8 110.5,576.8 115.7,583.3 123.5,591.1 132.6,601.5 143.0,605.9 145.6,607.5 149.5,601.5 157.3,602.3 162.5,610.6 168.5,604.9 174.3,605.4 179.5,608.0 184.7,598.9 189.9,600.7 193.8,598.9 199.0,595.5 205.5,598.9 214.6,591.9 219.8,598.1 226.3,585.9 230.2,593.7 236.7,598.9 244.5,602.8 251.0,609.3 257.5,611.1 264.0,604.1 270.5,600.7 275.7,595.0 283.5,598.9 291.3,589.8 296.5,589.3 303.0,597.1 306.9,594.5 313.4,596.3 318.6,605.4 326.4,611.9 330.3,595.0 338.1,591.9 343.3,592.4 349.8,582.0 355.0,582.0 362.8,592.4 369.3,593.7 377.1,583.3 383.6,595.0 387.5,598.9 392.7,599.7 395.2,604.1 400.4,592.4 405.1,576.8 407.7,579.9 410.8,571.6 416.0,578.1 423.3,587.7 426.4,574.2 429.5,559.9 432.9,571.1 436.3,571.1 438.9,560.7 442.0,562.5 445.1,557.3 448.5,562.5 451.9,560.7 455.0,563.8 457.6,569.5 460.2,569.0 465.4,580.7 469.3,585.9 475.8,585.9 481.0,587.7 487.5,591.1 492.7,598.9 499.2,604.1 503.9,607.5 507.0,605.9 514.8,610.6 518.7,610.1 524.7,613.2 528.4,608.0 533.0,609.3 540.3,614.5 544.0,607.5 547.3,608.0 551.2,607.5 556.4,610.1 561.7,602.8 564.8,582.0 568.2,567.7 572.1,575.5 576.0,584.6 582.5,592.4 591.6,598.9 595.5,593.7 599.4,593.7 602.7,583.3 605.9,584.6 611.1,592.4 616.3,598.9 620.9,601.5 624.1,590.3 629.3,584.1 634.5,593.7 639.7,598.9 647.5,603.3 655.3,597.6 660.5,588.5 665.7,593.7 673.5,599.7 681.3,606.7 689.1,598.9 695.6,599.7 702.1,600.7 708.6,603.3 715.1,605.4 721.6,598.1 726.8,591.9 730.7,591.1 734.6,593.7 738.5,594.5 741.1,598.1 748.9,602.8 754.1,606.7 760.6,611.1 767.1,613.7 771.8,604.1 774.4,604.1 780.1,598.1 783.9,583.3 786.5,580.7 792.5,589.8 796.1,585.9 798.7,586.7 802.1,580.7 806.0,588.5 813.8,598.9 817.7,597.1 822.9,602.8 826.8,605.9 829.9,596.3 832.8,578.1 835.9,582.0 841.1,584.1 848.9,591.9 851.5,578.1 856.7,578.1 860.6,571.6 865.8,574.7 872.3,578.9 878.8,585.9 885.3,592.4 891.8,596.3 895.7,593.7 898.3,589.8 903.5,589.3 906.9,583.3 912.6,591.1 917.8,583.3 922.5,580.7 925.1,584.6 930.8,566.4 936.0,575.5 941.2,584.6 947.8,591.1 950.4,589.3 953.7,592.9 956.9,593.7 959.5,600.7 964.7,605.9 971.2,608.5 976.4,611.9 980.3,604.1 984.2,607.5 993.3,613.7 1001.1,615.3 1011.5,618.4 1021.9,619.7 1029.7,621.0 1033.6,614.5 1036.2,615.8 1039.6,611.1 1042.7,611.9 1048.4,606.7 1051.0,580.7 1057.0,586.7 1060.9,587.7 1066.1,593.7 1072.6,596.3 1079.1,602.8 1088.2,611.1 1091.6,591.9 1094.7,593.7 1098.6,589.3 1101.2,589.8 1103.8,582.0 1109.0,589.8 1116.8,595.0 1120.7,592.9 1125.4,591.9 1128.5,577.3 1132.4,588.5 1140.2,596.3 1144.1,595.0 1149.3,600.2 1157.1,608.0 1162.3,611.1 1166.2,609.3 1172.7,613.7 1177.9,614.5"/>
<polyline fill="none" stroke="#f5e232" stroke-width="1.15" stroke-linejoin="round" points="7.8,596.3 16.9,598.1 26.0,593.7 35.1,589.8 44.2,576.8 52.0,566.4 61.1,561.7 66.3,561.7 72.8,572.9 78.0,578.1 88.4,592.9 97.5,580.7 107.2,567.7 114.4,572.9 122.2,578.1 132.6,588.5 141.7,595.0 149.5,596.3 158.6,602.3 166.4,591.9 173.0,589.3 179.5,586.7 186.0,593.7 193.8,598.1 202.9,601.5 210.7,603.3 221.1,604.1 228.9,599.7 235.4,600.7 243.2,606.7 248.4,608.0 257.5,598.1 265.3,599.7 271.8,602.8 279.6,598.1 288.7,597.1 296.5,591.9 303.0,597.1 314.7,601.5 322.5,593.7 328.2,587.7 335.5,595.0 344.6,597.1 355.0,590.3 362.8,592.4 371.9,598.1 381.0,598.1 390.1,603.3 399.1,604.1 405.6,595.0 414.7,580.7 423.8,574.2 429.0,566.4 436.8,563.8 444.6,556.5 454.5,551.3 460.7,555.5 468.0,569.0 478.4,587.2 488.8,598.9 496.6,593.7 507.0,583.3 517.4,575.5 525.2,570.3 533.0,569.0 540.3,563.8 548.6,566.4 556.4,568.5 564.3,576.8 572.1,574.2 579.9,591.1 590.3,598.1 598.1,602.3 608.5,596.3 618.9,600.2 629.3,600.7 639.7,602.3 650.1,604.1 657.9,606.7 667.0,604.1 676.1,607.5 683.9,605.4 691.7,608.5 702.1,610.1 711.2,612.7 718.2,606.7 725.5,608.0 735.9,605.4 746.3,605.9 755.4,602.8 764.5,593.7 768.4,589.8 773.6,592.4 780.1,598.9 787.8,591.1 795.6,585.9 802.1,579.4 807.3,579.4 813.8,587.2 820.3,593.7 828.1,593.7 830.7,596.3 842.4,588.5 848.9,590.3 858.0,580.7 868.4,566.4 878.8,556.5 884.0,563.8 891.8,576.8 898.3,581.5 904.8,580.7 910.0,578.1 915.2,579.9 925.6,574.2 934.7,561.2 940.5,558.6 947.8,571.6 956.9,583.3 966.0,580.7 973.8,575.5 981.6,572.9 988.1,572.9 995.9,566.4 1006.3,556.0 1019.3,543.0 1029.7,535.7 1036.2,536.5 1042.7,541.7 1050.5,554.7 1060.9,574.2 1070.0,585.9 1073.9,589.3 1079.1,588.5 1089.0,578.9 1094.7,585.9 1101.2,593.7 1107.7,593.7 1114.2,598.9 1120.7,604.1 1125.9,603.3 1133.7,593.7 1144.1,588.5 1150.6,593.7 1157.1,588.5 1164.9,580.7 1172.7,571.6 1177.4,566.9"/>
<polyline fill="none" stroke="#157a15" stroke-width="1.15" stroke-linejoin="round" points="7.8,685.3 14.3,687.1 18.2,686.1 26.0,684.0 33.8,684.5 41.6,681.4 45.5,678.3 52.0,680.9 57.2,682.7 62.4,686.6 68.9,687.9 75.4,691.3 83.2,689.7 89.7,686.6 93.6,691.3 100.1,700.1 106.1,705.3 110.5,699.6 114.4,689.2 118.3,685.3 124.8,685.3 127.4,686.1 132.6,686.1 137.8,684.0 141.7,686.1 149.5,685.3 154.7,687.9 158.6,687.1 163.8,680.1 168.5,675.7 174.3,680.1 179.5,680.9 186.0,686.6 191.2,686.6 196.4,688.7 200.3,692.3 210.7,692.3 218.5,690.5 223.7,689.7 226.8,692.3 232.8,689.7 236.7,685.3 241.9,683.5 249.7,685.3 253.6,684.5 260.1,686.6 266.6,688.7 271.8,691.3 277.0,691.3 286.1,687.1 291.3,685.3 299.1,685.8 306.9,685.3 313.4,687.1 317.3,684.5 321.2,678.8 325.1,676.2 328.2,678.8 332.9,687.9 338.1,694.4 343.3,696.5 347.2,693.9 351.1,694.9 355.0,694.4 360.2,688.7 366.7,686.6 371.9,685.3 375.8,687.9 380.2,693.6 384.9,691.3 392.7,686.1 395.7,683.5 400.4,686.6 405.6,695.7 414.7,705.6 417.3,704.3 422.5,694.4 426.4,693.1 431.6,703.5 435.5,709.5 439.9,713.1 444.6,717.3 449.8,710.0 455.0,704.8 461.5,689.2 469.3,672.3 472.7,673.6 475.8,679.3 479.7,683.5 487.5,685.3 497.9,674.1 504.4,671.5 508.3,673.6 513.5,680.1 518.7,682.7 522.6,685.3 527.8,682.7 534.3,685.3 539.5,681.4 543.4,681.4 547.3,686.1 553.8,689.2 563.0,690.5 568.2,699.1 571.5,704.0 574.7,700.1 579.9,685.3 583.8,681.9 587.7,681.4 595.5,687.9 604.6,694.9 608.5,694.4 613.1,685.3 617.6,680.1 621.5,681.9 625.4,686.1 630.6,695.2 634.5,696.2 639.7,690.5 646.2,681.4 650.1,681.9 656.6,687.9 661.8,693.1 665.7,693.1 672.2,687.9 677.4,685.3 682.6,683.5 686.5,685.3 691.7,689.2 696.9,688.7 704.7,686.1 715.1,684.8 721.6,686.6 728.1,690.5 733.3,691.3 743.7,688.7 750.2,685.3 756.7,684.0 765.8,684.5 774.9,686.1 780.1,687.9 785.2,691.3 790.4,693.1 796.9,690.5 803.4,690.5 808.6,688.7 816.4,682.7 822.9,681.4 826.8,680.9 830.7,685.3 834.6,691.8 839.3,696.2 843.7,694.4 848.9,689.7 852.8,690.5 858.0,694.9 863.2,696.2 869.7,694.9 874.9,691.3 880.1,687.9 885.3,684.5 891.8,684.0 898.3,687.9 903.5,690.5 908.7,691.3 913.9,689.2 917.8,689.2 921.7,692.3 925.6,692.3 930.8,694.9 935.5,697.5 939.9,694.4 946.4,685.3 950.4,681.9 955.6,684.5 959.5,683.5 965.2,678.3 971.2,678.0 976.4,678.8 982.9,682.7 986.8,684.8 990.1,684.8 993.3,680.1 999.0,676.2 1003.7,679.3 1008.3,680.1 1012.8,678.3 1018.0,674.9 1024.5,677.5 1029.7,679.3 1036.2,681.4 1042.7,684.0 1049.2,689.2 1054.4,692.3 1058.3,692.3 1063.5,687.9 1070.0,685.3 1073.9,686.1 1079.1,687.1 1084.3,682.7 1088.2,679.3 1092.1,682.7 1096.0,690.5 1103.8,695.2 1107.7,693.9 1112.9,687.9 1119.4,685.3 1123.3,686.6 1128.5,692.3 1133.7,693.6 1140.2,690.5 1146.7,686.6 1151.9,682.7 1157.1,677.5 1161.0,675.7 1166.2,678.3 1172.7,679.3 1177.9,681.4"/>
<polyline fill="none" stroke="#c00010" stroke-width="1.15" stroke-linejoin="round" points="7.8,687.1 13.0,689.7 20.8,691.3 28.6,691.3 36.4,693.1 44.2,695.7 52.0,698.3 61.1,700.1 67.6,698.3 78.0,693.1 88.4,686.6 101.4,678.8 110.5,671.0 117.0,668.4 123.5,669.7 130.0,675.7 137.8,680.1 145.6,685.3 153.4,689.7 161.2,691.8 169.1,694.4 176.9,698.3 183.4,701.4 189.9,699.6 197.7,697.0 205.5,691.8 213.3,685.3 221.1,681.4 228.9,679.6 234.1,680.1 241.9,682.7 249.7,686.6 257.5,690.5 265.3,691.3 273.1,689.7 280.9,687.9 288.7,686.1 296.5,686.6 305.6,687.9 314.7,689.2 322.5,693.1 329.0,695.2 336.8,695.7 343.3,693.1 351.1,684.0 358.9,680.1 368.0,678.8 377.1,680.1 387.5,683.5 397.8,685.3 405.6,686.1 416.0,676.2 426.4,668.4 431.6,663.7 436.8,660.6 444.6,650.2 451.9,641.1 460.2,641.9 466.7,652.8 473.2,664.5 479.7,680.1 486.2,691.3 494.0,698.3 504.4,707.4 512.8,711.3 522.6,709.5 533.0,705.3 543.4,701.7 551.2,697.0 559.1,694.4 564.8,689.7 570.8,681.9 577.3,678.8 583.8,676.7 587.7,677.5 592.9,681.4 598.1,684.5 608.5,683.2 616.3,685.3 624.1,687.1 631.9,686.6 638.4,684.5 644.9,684.0 652.7,686.6 659.2,687.9 669.6,685.3 678.7,685.8 689.1,687.9 699.5,687.4 708.6,688.7 717.7,691.3 725.5,690.5 735.9,687.9 746.3,686.1 756.7,686.6 767.1,689.7 774.9,691.3 782.7,691.3 790.4,687.9 799.5,682.7 806.0,681.4 816.4,683.5 822.9,686.6 830.7,690.5 838.5,690.5 846.3,687.9 854.1,681.9 863.2,678.8 873.6,673.1 880.1,674.1 889.2,678.8 897.0,683.5 907.4,686.1 915.2,686.1 925.6,683.5 933.4,679.3 941.2,675.7 947.8,676.2 955.6,679.3 962.1,685.3 969.9,691.8 980.3,700.9 988.1,702.7 994.6,704.3 1002.4,703.5 1008.9,705.3 1014.1,707.4 1021.9,707.4 1031.0,710.0 1037.5,709.5 1046.6,706.1 1055.7,698.3 1066.1,690.5 1073.9,686.6 1081.7,687.9 1089.5,690.5 1097.3,691.3 1102.5,691.3 1110.3,686.6 1118.1,684.8 1125.9,683.5 1132.4,683.5 1142.8,680.1 1149.3,682.7 1157.1,687.9 1164.9,694.4 1172.7,700.9 1177.9,703.5"/>
<line x1="8" y1="687.5" x2="1179" y2="687.5" stroke="#3f87b5" stroke-width="1" shape-rendering="crispEdges"/>
</g>
<g shape-rendering="crispEdges" fill="#787878">
<rect x="7" y="47" width="1524" height="1"/><rect x="7" y="755" width="1524" height="1"/><rect x="7" y="47" width="1" height="709"/><rect x="1530" y="47" width="1" height="709"/>
<rect x="1463" y="47" width="1" height="709"/>
<rect x="7" y="524" width="1524" height="1"/><rect x="7" y="630" width="1524" height="1"/><rect x="7" y="726" width="1524" height="1"/>
<rect x="1464" y="67" width="4" height="1"/>
<rect x="1464" y="112" width="4" height="1"/>
<rect x="1464" y="156" width="4" height="1"/>
<rect x="1464" y="246" width="4" height="1"/>
<rect x="1464" y="290" width="4" height="1"/>
<rect x="1464" y="335" width="4" height="1"/>
<rect x="1464" y="379" width="4" height="1"/>
<rect x="1464" y="424" width="4" height="1"/>
<rect x="1464" y="468" width="4" height="1"/>
<rect x="1464" y="513" width="4" height="1"/>
<rect x="1464" y="176" width="4" height="1" fill="#000"/>
<rect x="1464" y="534" width="4" height="1"/>
<rect x="1464" y="578" width="4" height="1"/>
<rect x="1464" y="623" width="4" height="1"/>
<rect x="1464" y="639" width="4" height="1"/>
<rect x="1464" y="687" width="4" height="1"/>
<rect x="23" y="727" width="1" height="3"/>
<rect x="158" y="727" width="1" height="3"/>
<rect x="285" y="727" width="1" height="3"/>
<rect x="414" y="727" width="1" height="3"/>
<rect x="543" y="727" width="1" height="3"/>
<rect x="672" y="727" width="1" height="3"/>
<rect x="808" y="727" width="1" height="3"/>
<rect x="943" y="727" width="1" height="3"/>
<rect x="1076" y="727" width="1" height="3"/>
<rect x="1199" y="727" width="1" height="3"/>
<rect x="1331" y="727" width="1" height="3"/>
</g>
<text x="1473" y="71.2" font-size="12.3" fill="#d6d6d6" text-anchor="start" font-weight="normal">7</text>
<text x="1473" y="116.2" font-size="12.3" fill="#d6d6d6" text-anchor="start" font-weight="normal">6.500</text>
<text x="1473" y="160.2" font-size="12.3" fill="#d6d6d6" text-anchor="start" font-weight="normal">6.000</text>
<text x="1473" y="250.2" font-size="12.3" fill="#d6d6d6" text-anchor="start" font-weight="normal">5.000</text>
<text x="1473" y="294.2" font-size="12.3" fill="#d6d6d6" text-anchor="start" font-weight="normal">4.500</text>
<text x="1473" y="339.2" font-size="12.3" fill="#d6d6d6" text-anchor="start" font-weight="normal">4.000</text>
<text x="1473" y="383.2" font-size="12.3" fill="#d6d6d6" text-anchor="start" font-weight="normal">3.500</text>
<text x="1473" y="428.2" font-size="12.3" fill="#d6d6d6" text-anchor="start" font-weight="normal">3.000</text>
<text x="1473" y="472.2" font-size="12.3" fill="#d6d6d6" text-anchor="start" font-weight="normal">2.500</text>
<text x="1473" y="517.2" font-size="12.3" fill="#d6d6d6" text-anchor="start" font-weight="normal">2.000</text>
<text x="1473" y="538.2" font-size="12.3" fill="#d6d6d6" text-anchor="start" font-weight="normal">80.0000</text>
<text x="1473" y="582.2" font-size="12.3" fill="#d6d6d6" text-anchor="start" font-weight="normal">40.0000</text>
<text x="1473" y="627.2" font-size="12.3" fill="#d6d6d6" text-anchor="start" font-weight="normal">0.0000</text>
<text x="1473" y="643.2" font-size="12.3" fill="#d6d6d6" text-anchor="start" font-weight="normal">1.000</text>
<text x="1473" y="691.2" font-size="12.3" fill="#d6d6d6" text-anchor="start" font-weight="normal">0.000</text>
<rect x="1463" y="167" width="49" height="19" fill="#ffffff"/>
<rect x="1463" y="176" width="4" height="1" fill="#111" shape-rendering="crispEdges"/>
<text x="1473" y="180.7" font-size="12.3" fill="#2a2a2a" text-anchor="start" font-weight="normal">5.780</text>
<rect x="1463" y="187" width="63" height="19" fill="#ffffff"/>
<text x="1468" y="200.7" font-size="12.3" fill="#2a2a2a" text-anchor="start" font-weight="normal" textLength="47.5" lengthAdjust="spacingAndGlyphs">03:02:19</text>
<rect x="1481.5" y="55.5" width="32" height="20" rx="4" fill="#000" stroke="#2a2e39" stroke-width="1"/>
<text x="1486.3" y="70.2" font-size="12.2" fill="#d1d4dc" text-anchor="start" font-weight="normal" textLength="22.5" lengthAdjust="spacingAndGlyphs">EUR</text>
<text x="22.6" y="746.8" font-size="11.6" fill="#d6d6d6" text-anchor="middle" font-weight="normal">Set</text>
<text x="157.6" y="746.8" font-size="11.6" fill="#d6d6d6" text-anchor="middle" font-weight="normal">Nov</text>
<text x="285.6" y="746.8" font-size="11.6" fill="#d6d6d6" text-anchor="middle" font-weight="bold">2020</text>
<text x="414.6" y="746.8" font-size="11.6" fill="#d6d6d6" text-anchor="middle" font-weight="normal">Mar</text>
<text x="543.6" y="746.8" font-size="11.6" fill="#d6d6d6" text-anchor="middle" font-weight="normal">Maio</text>
<text x="672.6" y="746.8" font-size="11.6" fill="#d6d6d6" text-anchor="middle" font-weight="normal">Jul</text>
<text x="808.6" y="746.8" font-size="11.6" fill="#d6d6d6" text-anchor="middle" font-weight="normal">Set</text>
<text x="943.6" y="746.8" font-size="11.6" fill="#d6d6d6" text-anchor="middle" font-weight="normal">Nov</text>
<text x="1076.6" y="746.8" font-size="11.6" fill="#d6d6d6" text-anchor="middle" font-weight="bold">2021</text>
<text x="1198.6" y="746.8" font-size="11.6" fill="#d6d6d6" text-anchor="middle" font-weight="normal">Mar</text>
<text x="1330.6" y="746.8" font-size="11.6" fill="#d6d6d6" text-anchor="middle" font-weight="normal">Maio</text>
<text x="1456.5" y="746.8" font-size="11.6" fill="#d6d6d6" text-anchor="start" font-weight="normal">J</text>
<text x="17" y="70.5" font-size="12.5" fill="#e6e6e6" text-anchor="start" font-weight="bold" textLength="213" lengthAdjust="spacingAndGlyphs">ALTRI SGPS, 1D, EURONEXT LISBON</text>
<text x="17" y="89.5" font-size="12.5" fill="#d6d6d6" text-anchor="start" font-weight="normal" textLength="166" lengthAdjust="spacingAndGlyphs">VolBar (40, 400, 500, 50, 25)</text>
<text x="17" y="108.5" font-size="12.5" fill="#d6d6d6" text-anchor="start" font-weight="normal" textLength="19.5" lengthAdjust="spacingAndGlyphs">Vol</text>
<text x="17" y="547.5" font-size="12.5" fill="#d6d6d6" text-anchor="start" font-weight="normal" textLength="58" lengthAdjust="spacingAndGlyphs">DMI (8, 8)</text>
<text x="17" y="653.5" font-size="12.5" fill="#d6d6d6" text-anchor="start" font-weight="normal" textLength="61.5" lengthAdjust="spacingAndGlyphs">Didi Index</text>
<text x="8" y="18.5" font-size="12.5" fill="#ffffff" text-anchor="start" font-weight="bold" textLength="89" lengthAdjust="spacingAndGlyphs">DocinhoTrader</text>
<text y="18.5" font-size="12.5" fill="#ffffff"><tspan x="101.4" textLength="59" lengthAdjust="spacingAndGlyphs">publicado</tspan> <tspan x="165" textLength="14.5" lengthAdjust="spacingAndGlyphs">no</tspan> <tspan x="184.2" textLength="110.4" lengthAdjust="spacingAndGlyphs">TradingView.com,</tspan> <tspan x="299.6" textLength="58.6" lengthAdjust="spacingAndGlyphs">Fevereiro</tspan> <tspan x="363" textLength="16.6" lengthAdjust="spacingAndGlyphs">18,</tspan> <tspan x="383.5" textLength="26.2" lengthAdjust="spacingAndGlyphs">2021</tspan> <tspan x="414.7" textLength="49.6" lengthAdjust="spacingAndGlyphs">14:22:47</tspan> <tspan x="468.2" textLength="22.6" lengthAdjust="spacingAndGlyphs">UTC</tspan></text>
<text x="8" y="36.5" font-size="12.5" fill="#ffffff" text-anchor="start" font-weight="bold" textLength="152" lengthAdjust="spacingAndGlyphs">EURONEXT_DLY:ALTR, 1D</text>
<text x="166.5" y="36.5" font-size="12.5" fill="#ffffff" text-anchor="start" font-weight="normal" textLength="30.5" lengthAdjust="spacingAndGlyphs">5.780</text>
<path d="M200.8 37 L206.5 26.5 L212.2 37 Z" fill="#26a69a"/>
<text x="216" y="36.5" font-size="12.5" fill="#ffffff" text-anchor="start" font-weight="normal" textLength="94" lengthAdjust="spacingAndGlyphs">+0.035 (+0.61%)</text>
<text x="316" y="36.5" font-size="12.5" fill="#ffffff" text-anchor="start" font-weight="bold">O:</text>
<text x="330.5" y="36.5" font-size="12.5" fill="#26a69a" text-anchor="start" font-weight="normal" textLength="30.5" lengthAdjust="spacingAndGlyphs">5.735</text>
<text x="366.8" y="36.5" font-size="12.5" fill="#ffffff" text-anchor="start" font-weight="bold">H:</text>
<text x="380.4" y="36.5" font-size="12.5" fill="#26a69a" text-anchor="start" font-weight="normal" textLength="30.5" lengthAdjust="spacingAndGlyphs">5.850</text>
<text x="416.7" y="36.5" font-size="12.5" fill="#ffffff" text-anchor="start" font-weight="bold">L:</text>
<text x="427" y="36.5" font-size="12.5" fill="#26a69a" text-anchor="start" font-weight="normal" textLength="30.5" lengthAdjust="spacingAndGlyphs">5.735</text>
<text x="463.5" y="36.5" font-size="12.5" fill="#ffffff" text-anchor="start" font-weight="bold">C:</text>
<text x="476" y="36.5" font-size="12.5" fill="#26a69a" text-anchor="start" font-weight="normal" textLength="30.5" lengthAdjust="spacingAndGlyphs">5.780</text>
<g fill="#2196f3"><circle cx="11.6" cy="779.4" r="4.8"/><circle cx="19" cy="774.6" r="6.8"/><circle cx="28.7" cy="778.4" r="5.8"/><rect x="11.6" y="776" width="17.1" height="8.2"/></g>
<path d="M6 782 L17.5 773.9 L24.1 780.3 L34 771.4" fill="none" stroke="#131722" stroke-width="1.3" stroke-linejoin="round"/>
<circle cx="17.5" cy="773.9" r="1.9" fill="#131722"/><circle cx="24.1" cy="780.3" r="1.9" fill="#131722"/>
<text x="37.2" y="779.9" font-size="12.8" fill="#ffffff" text-anchor="start" font-weight="normal" textLength="77" lengthAdjust="spacingAndGlyphs">TradingView</text>
</svg>
</body></html>
